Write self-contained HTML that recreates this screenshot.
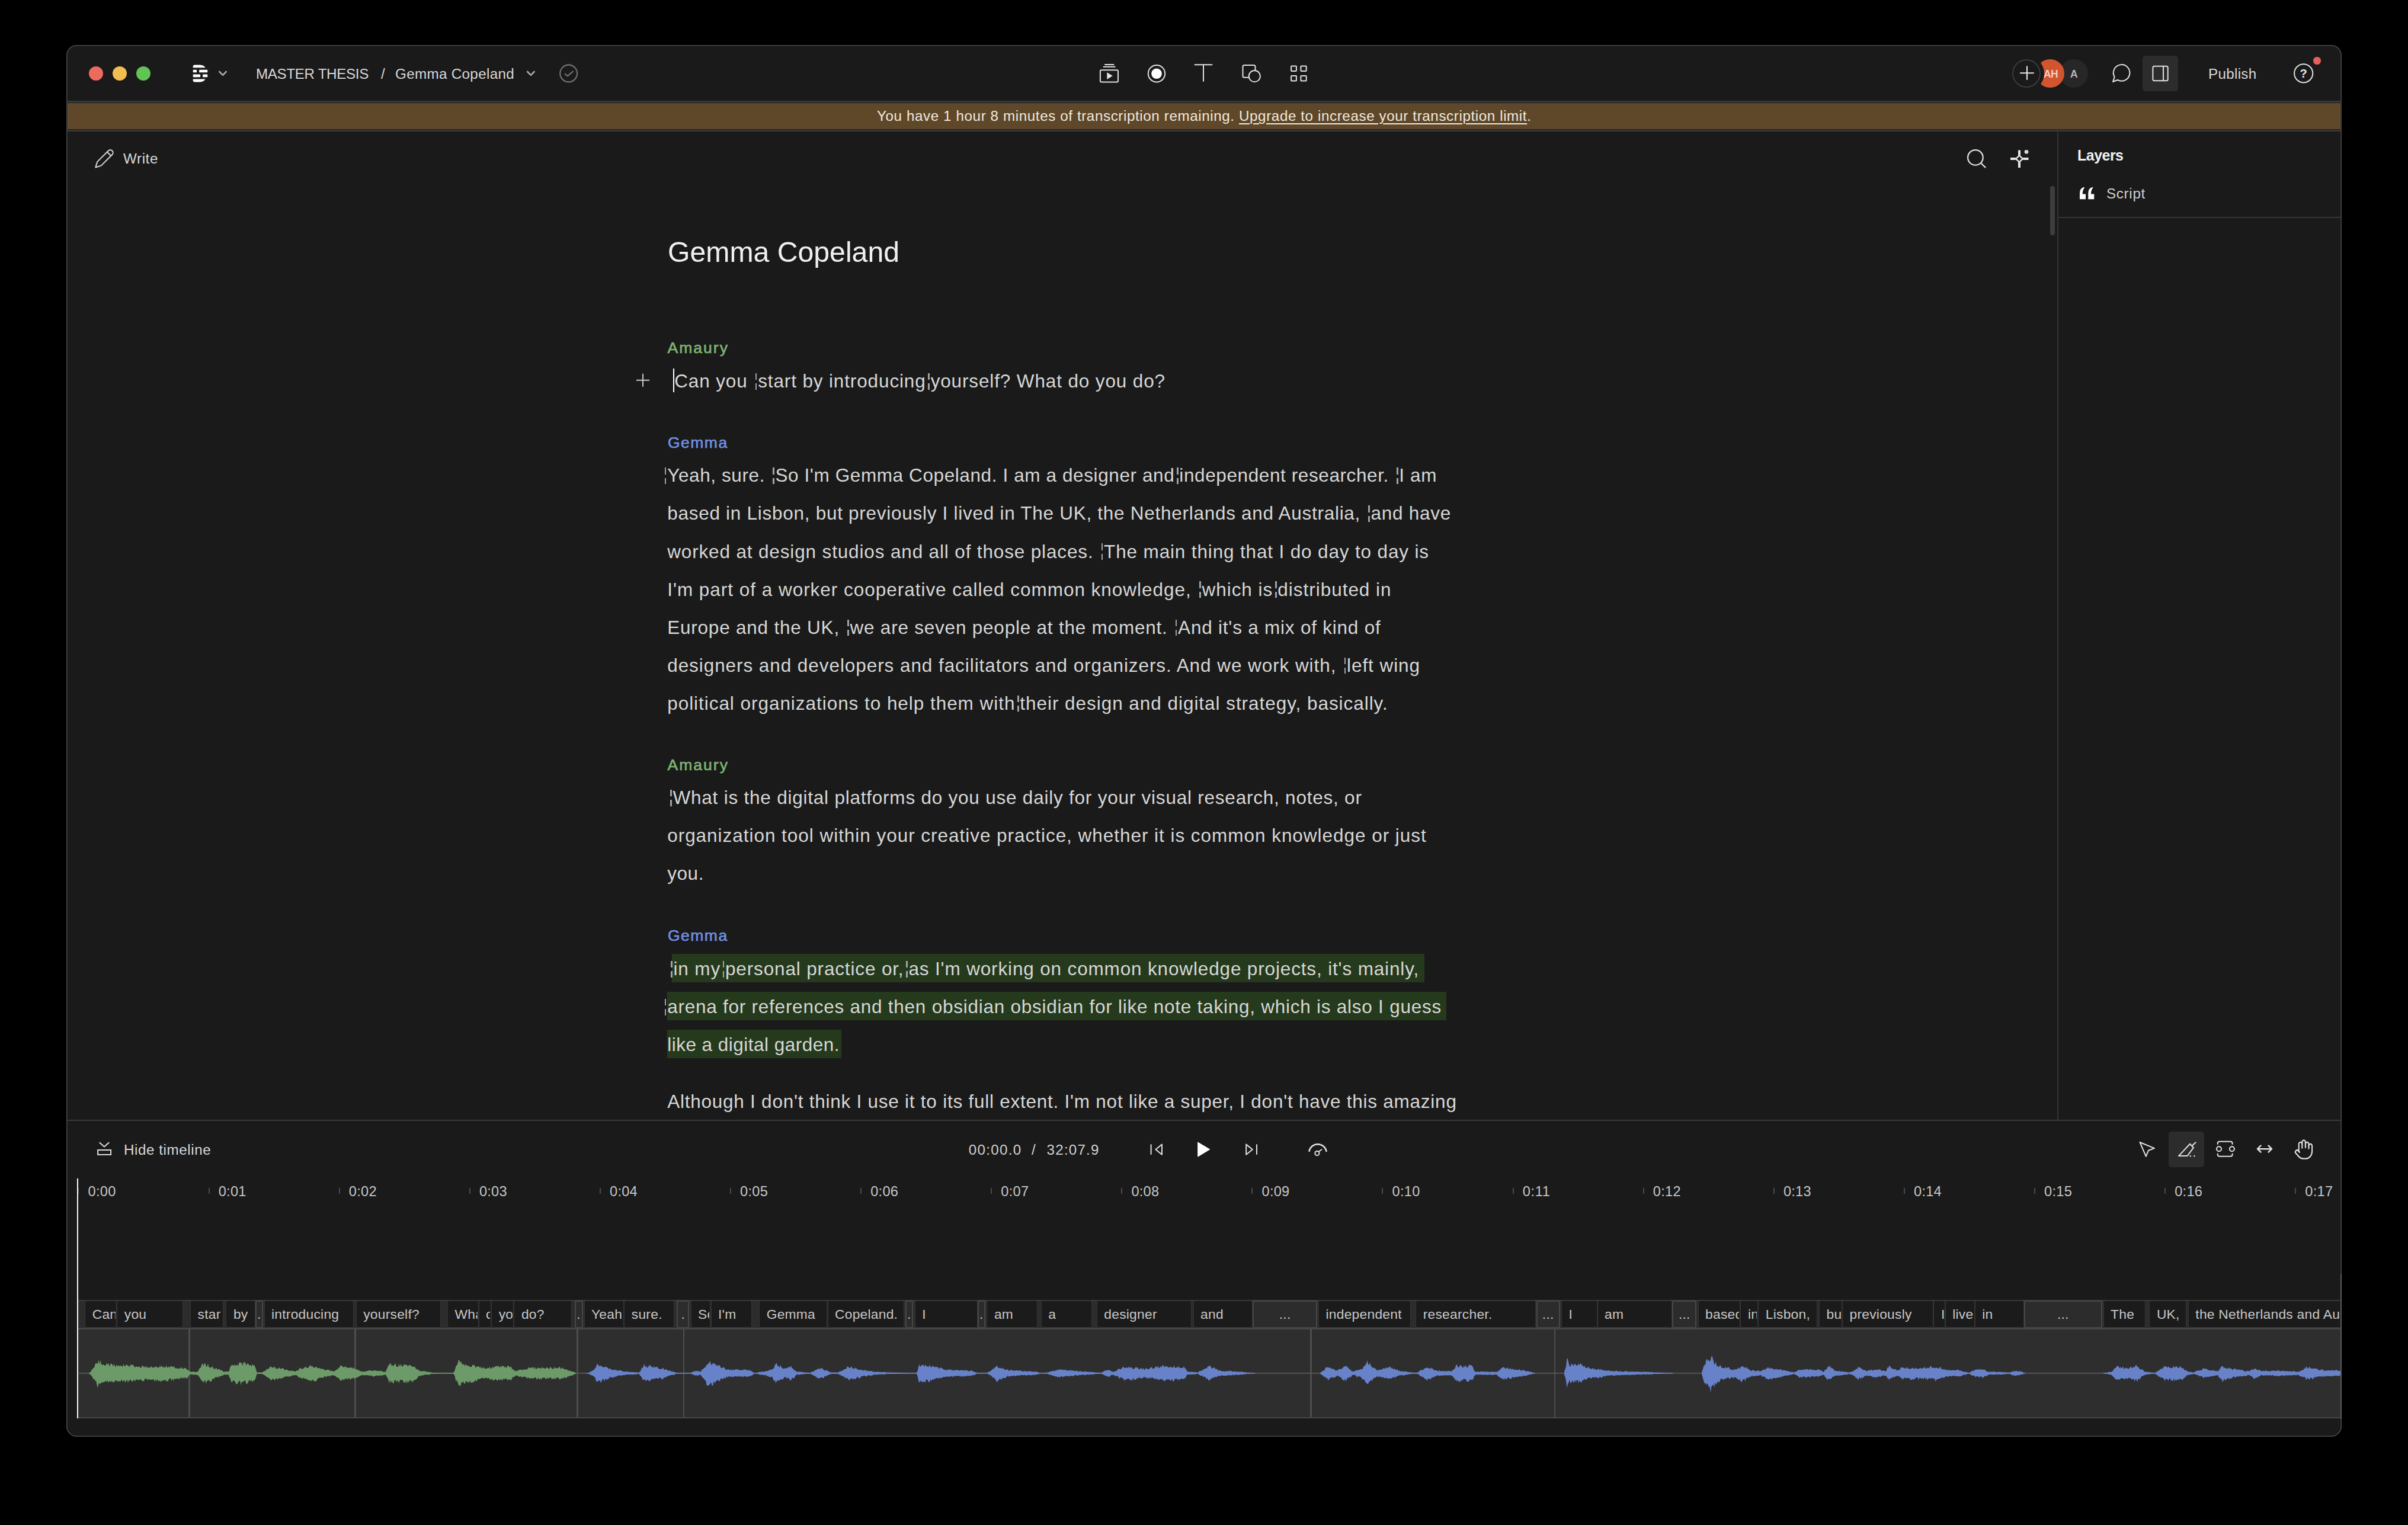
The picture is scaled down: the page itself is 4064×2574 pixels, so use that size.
<!DOCTYPE html><html><head><meta charset="utf-8"><title>Descript</title><style>
html,body{margin:0;padding:0;background:#000;}
body{width:4064px;height:2574px;position:relative;overflow:hidden;font-family:"Liberation Sans",sans-serif;}
.abs{position:absolute;}
.win{position:absolute;left:112px;top:76px;width:3840px;height:2349px;background:#1a1a1a;border-radius:17.5px;box-shadow:inset 0 0 0 1.6px #474747;overflow:hidden;}
.t{position:absolute;white-space:pre;line-height:40px;height:40px;}
.t u{text-decoration-thickness:2px;text-underline-offset:4px;}
.hl{position:absolute;background:#253a1c;}
.ln{position:absolute;background:#383838;}
.mk{display:inline-block;width:8.0px;height:1px;position:relative;vertical-align:baseline;}
.mk0{width:0;}
.mk:before,.mk:after{content:"";position:absolute;right:1.8px;width:2.4px;background:#a2a2a2;}
.mk:before{top:-23.2px;height:11.4px;}
.mk:after{top:-5.7px;height:10.4px;}
.mk0:before,.mk0:after{right:1.8px;}
.wb{position:absolute;top:2195.3px;height:46px;box-sizing:border-box;background:#1b1b1b;border:1.6px solid #343434;border-top-width:1px;border-bottom-width:1px;border-radius:3px;overflow:hidden;}
.wg{position:absolute;top:2194.5px;height:47.5px;box-sizing:border-box;background:#2c2c2c;border:2px solid #474747;border-radius:3px;}
.wt{position:absolute;white-space:pre;line-height:40px;height:40px;color:#c6c6c6;letter-spacing:0.25px;}

</style></head><body>
<div class="win"></div>
<div class="abs" style="left:113.0px;top:170.3px;width:3838.0px;height:2.3px;background:#383838;"></div>
<div class="abs" style="left:114.0px;top:173.6px;width:3836.0px;height:44.4px;background:#5f4829;"></div>
<div class="abs" style="left:113.0px;top:219.3px;width:3838.0px;height:2.3px;background:#383838;"></div>
<div class="abs" style="left:3471.5px;top:221.0px;width:2.5px;height:1669.0px;background:#333;"></div>
<div class="abs" style="left:3474.0px;top:366.3px;width:477.0px;height:2.0px;background:#353535;"></div>
<div class="abs" style="left:3460.0px;top:314.0px;width:7.5px;height:83.0px;background:#3d3d3d;border-radius:4px;"></div>
<div class="abs" style="left:113.0px;top:1889.5px;width:3838.0px;height:2.5px;background:#383838;"></div>
<div class="abs" style="left:3616.0px;top:94.3px;width:60.0px;height:60.0px;background:#2c2c2c;border-radius:5px;"></div>
<div class="abs" style="left:3660.4px;top:1910.2px;width:59.5px;height:59.5px;background:#2c2c2c;border-radius:5px;"></div>
<div class="abs" style="left:150.0px;top:112.0px;width:24.0px;height:24.0px;background:#ed6a5e;border-radius:50%;"></div>
<div class="abs" style="left:190.0px;top:112.0px;width:24.0px;height:24.0px;background:#f4bd4f;border-radius:50%;"></div>
<div class="abs" style="left:230.0px;top:112.0px;width:24.0px;height:24.0px;background:#61c454;border-radius:50%;"></div>
<div class="abs" style="left:3476.0px;top:100.0px;width:48.0px;height:48.0px;background:#272727;border-radius:50%;"></div>
<div class="abs" style="left:3436.0px;top:100.0px;width:48.0px;height:48.0px;background:#d2552f;border-radius:50%;"></div>
<div class="abs" style="left:3904.2px;top:96.1px;width:12.6px;height:12.6px;background:#e5605c;border-radius:50%;"></div>
<div class="hl" style="left:1134px;top:1610.2px;width:1269.6px;height:47.4px"></div>
<div class="hl" style="left:1126px;top:1674.2px;width:1315.0px;height:47.4px"></div>
<div class="hl" style="left:1126px;top:1738.2px;width:293.8px;height:47.4px"></div>
<div class="abs" style="left:1135.8px;top:622.0px;width:2.2px;height:40.0px;background:#ffffff;"></div>
<div class="abs" style="left:132.0px;top:2194.0px;width:3819.0px;height:48.0px;background:#2c2c2c;"></div>
<div class="abs" style="left:132.0px;top:2194.1px;width:3819.0px;height:1.8px;background:#3b3b3b;"></div>
<div class="abs" style="left:132.0px;top:2241.0px;width:3819.0px;height:2.6px;background:#454545;"></div>
<div class="abs" style="left:132.0px;top:2243.6px;width:3819.0px;height:148.4px;background:#2e2e2e;"></div>
<div class="abs" style="left:132.0px;top:2391.7px;width:3819.0px;height:2.2px;background:#474747;"></div>
<div class="abs" style="left:318.1px;top:2243.0px;width:2.6px;height:149.0px;background:#4d4d4d;"></div>
<div class="abs" style="left:598.1px;top:2243.0px;width:2.6px;height:149.0px;background:#4d4d4d;"></div>
<div class="abs" style="left:973.4px;top:2243.0px;width:2.6px;height:149.0px;background:#4d4d4d;"></div>
<div class="abs" style="left:1152.8px;top:2243.0px;width:2.6px;height:149.0px;background:#4d4d4d;"></div>
<div class="abs" style="left:2211.1px;top:2243.0px;width:2.6px;height:149.0px;background:#4d4d4d;"></div>
<div class="abs" style="left:2622.8px;top:2243.0px;width:2.6px;height:149.0px;background:#4d4d4d;"></div>
<div class="wb" style="left:143.2px;width:54.1px"></div>
<div class="wb" style="left:197.3px;width:112.0px"></div>
<div class="wb" style="left:321.0px;width:56.4px"></div>
<div class="wb" style="left:381.4px;width:49.2px"></div>
<div class="wg" style="left:430.6px;width:13.3px"></div>
<div class="wb" style="left:445.5px;width:151.8px"></div>
<div class="wb" style="left:600.7px;width:143.8px"></div>
<div class="wb" style="left:755.0px;width:52.6px"></div>
<div class="wb" style="left:807.6px;width:21.6px"></div>
<div class="wb" style="left:829.2px;width:38.2px"></div>
<div class="wb" style="left:867.4px;width:97.2px"></div>
<div class="wg" style="left:969.6px;width:14.0px"></div>
<div class="wb" style="left:985.5px;width:67.8px"></div>
<div class="wb" style="left:1053.3px;width:85.1px"></div>
<div class="wg" style="left:1142.4px;width:20.6px"></div>
<div class="wb" style="left:1165.6px;width:33.9px"></div>
<div class="wb" style="left:1199.5px;width:69.1px"></div>
<div class="wb" style="left:1281.2px;width:115.3px"></div>
<div class="wb" style="left:1396.5px;width:129.5px"></div>
<div class="wg" style="left:1527.7px;width:13.3px"></div>
<div class="wb" style="left:1543.7px;width:106.1px"></div>
<div class="wg" style="left:1649.8px;width:13.2px"></div>
<div class="wb" style="left:1665.4px;width:85.6px"></div>
<div class="wb" style="left:1756.8px;width:86.2px"></div>
<div class="wb" style="left:1850.8px;width:160.5px"></div>
<div class="wb" style="left:2013.6px;width:100.7px"></div>
<div class="wg" style="left:2114.3px;width:108.7px"></div>
<div class="wb" style="left:2225.0px;width:155.7px"></div>
<div class="wb" style="left:2389.2px;width:203.3px"></div>
<div class="wg" style="left:2592.5px;width:40.5px"></div>
<div class="wb" style="left:2635.0px;width:60.5px"></div>
<div class="wb" style="left:2695.5px;width:126.9px"></div>
<div class="wg" style="left:2822.4px;width:40.9px"></div>
<div class="wb" style="left:2865.6px;width:71.8px"></div>
<div class="wb" style="left:2937.4px;width:29.9px"></div>
<div class="wb" style="left:2967.3px;width:99.3px"></div>
<div class="wb" style="left:3070.0px;width:39.0px"></div>
<div class="wb" style="left:3109.0px;width:154.4px"></div>
<div class="wb" style="left:3263.4px;width:19.3px"></div>
<div class="wb" style="left:3282.7px;width:50.1px"></div>
<div class="wb" style="left:3332.8px;width:83.2px"></div>
<div class="wg" style="left:3416.0px;width:131.7px"></div>
<div class="wb" style="left:3549.6px;width:71.2px"></div>
<div class="wb" style="left:3627.4px;width:62.9px"></div>
<div class="wb" style="left:3692.8px;width:267.2px"></div>
<div class="abs" style="left:131.4px;top:2005.0px;width:2.0px;height:9.5px;background:#4a4a4a;"></div>
<div class="abs" style="left:351.5px;top:2005.0px;width:2.0px;height:9.5px;background:#4a4a4a;"></div>
<div class="abs" style="left:571.6px;top:2005.0px;width:2.0px;height:9.5px;background:#4a4a4a;"></div>
<div class="abs" style="left:791.7px;top:2005.0px;width:2.0px;height:9.5px;background:#4a4a4a;"></div>
<div class="abs" style="left:1011.8px;top:2005.0px;width:2.0px;height:9.5px;background:#4a4a4a;"></div>
<div class="abs" style="left:1231.9px;top:2005.0px;width:2.0px;height:9.5px;background:#4a4a4a;"></div>
<div class="abs" style="left:1452.0px;top:2005.0px;width:2.0px;height:9.5px;background:#4a4a4a;"></div>
<div class="abs" style="left:1672.1px;top:2005.0px;width:2.0px;height:9.5px;background:#4a4a4a;"></div>
<div class="abs" style="left:1892.2px;top:2005.0px;width:2.0px;height:9.5px;background:#4a4a4a;"></div>
<div class="abs" style="left:2112.3px;top:2005.0px;width:2.0px;height:9.5px;background:#4a4a4a;"></div>
<div class="abs" style="left:2332.4px;top:2005.0px;width:2.0px;height:9.5px;background:#4a4a4a;"></div>
<div class="abs" style="left:2552.5px;top:2005.0px;width:2.0px;height:9.5px;background:#4a4a4a;"></div>
<div class="abs" style="left:2772.6px;top:2005.0px;width:2.0px;height:9.5px;background:#4a4a4a;"></div>
<div class="abs" style="left:2992.7px;top:2005.0px;width:2.0px;height:9.5px;background:#4a4a4a;"></div>
<div class="abs" style="left:3212.8px;top:2005.0px;width:2.0px;height:9.5px;background:#4a4a4a;"></div>
<div class="abs" style="left:3432.9px;top:2005.0px;width:2.0px;height:9.5px;background:#4a4a4a;"></div>
<div class="abs" style="left:3653.0px;top:2005.0px;width:2.0px;height:9.5px;background:#4a4a4a;"></div>
<div class="abs" style="left:3873.1px;top:2005.0px;width:2.0px;height:9.5px;background:#4a4a4a;"></div>
<svg class="abs" style="left:0;top:0" width="4064" height="2574" viewBox="0 0 4064 2574" fill="none" stroke="#e0e0e0" stroke-width="2" stroke-linecap="round" stroke-linejoin="round">
<!-- logo -->
<g fill="#ffffff" stroke="none">
<path d="M325.7 114.3V112.2Q325.7 109.4 328.8 109.4H337.5Q344 109.6 346.6 114.3Z"/>
<rect x="325.7" y="117.7" width="6.4" height="4.6" rx="0.8"/><rect x="336.1" y="117.7" width="14.2" height="4.6" rx="0.8"/>
<rect x="325.7" y="125.6" width="12.4" height="4.7" rx="0.8"/><rect x="342.1" y="125.6" width="8.2" height="4.7" rx="0.8"/>
<path d="M325.7 133.6H346.6Q344 138.2 337.5 138.4H328.8Q325.7 138.4 325.7 135.7Z"/>
</g>
<!-- chevrons -->
<g stroke="#a9a9a9" stroke-width="2.6"><path d="M370.3 121L376 126.8L381.7 121"/><path d="M890.2 121L895.9 126.8L901.6 121"/></g>
<!-- check circle -->
<g stroke="#6e6e6e" stroke-width="2.3"><circle cx="959.7" cy="123.9" r="14.4"/><path d="M953.7 124.8L957.9 128.4L967 120.6"/></g>
<!-- scenes -->
<rect x="1856.9" y="118.2" width="30.1" height="20.4" rx="2"/><path d="M1862.5 112.7H1881.8M1865 108.9H1879.5"/>
<path d="M1868.3 122.3L1877.8 128.1L1868.3 133.9Z" fill="#e4e4e4" stroke="none"/>
<!-- record -->
<circle cx="1952" cy="124.2" r="14.2"/><circle cx="1952" cy="124.2" r="8.8" fill="#ffffff" stroke="none"/>
<!-- T -->
<path d="M2016.5 109.2H2045.5M2031 109.2V137"/>
<!-- shapes -->
<rect x="2097.5" y="110" width="21" height="20.8" rx="2.5"/><circle cx="2117.3" cy="128.6" r="9.6" fill="#1a1a1a"/>
<!-- grid -->
<rect x="2179.1" y="111.6" width="8.8" height="8.3" rx="0.8"/><rect x="2195.4" y="111.6" width="9.3" height="8.3" rx="0.8"/>
<rect x="2179.1" y="128.1" width="8.8" height="8.4" rx="0.8"/><rect x="2195.4" y="128.1" width="9.3" height="8.4" rx="0.8"/>
<!-- plus -->
<!-- chat -->
<path d="M3566 138L3568.7 129.9A13.8 13.8 0 1 1 3573.8 134.95Z"/>
<!-- sidebar -->
<rect x="3633.4" y="111.7" width="25.3" height="24.5" rx="2.5"/><path d="M3651 111.7V136.2"/>
<!-- help -->
<circle cx="3887.7" cy="123.8" r="15.6"/>
<text x="3887.7" y="131.2" font-size="20" font-weight="700" text-anchor="middle" fill="#e4e4e4" stroke="none" font-family="Liberation Sans, sans-serif">?</text>
<!-- pencil -->
<g transform="translate(175.2 268.6) rotate(45)" stroke="#d6d6d6" stroke-width="2"><path d="M-4.6 -15.4A4.6 4.6 0 0 1 4.6 -15.4L4.6 11L0 19.6L-4.6 11Z"/><path d="M-4.6 -12.6H4.6"/></g>
<!-- search -->
<g stroke="#dcdcdc" stroke-width="2.3"><circle cx="3333.9" cy="265.9" r="12.8"/><path d="M3343.2 275.2L3350.5 282.4"/></g>
<!-- sparkle -->
<g stroke="#e8e8e8"><path d="M3408 253.5V261M3408 275V283M3393 267.9H3401M3415 267.9H3423.5" stroke-width="4" stroke-linecap="butt"/>
<path d="M3408 260.2Q3409.5 266.5 3415.8 267.9Q3409.5 269.4 3408 275.8Q3406.5 269.4 3400.2 267.9Q3406.5 266.5 3408 260.2Z" stroke-width="2.4"/>
<circle cx="3420" cy="256.3" r="3.4" fill="#d6d6d6" stroke="none"/></g>
<!-- quote -->
<g fill="#ffffff" stroke="none"><path id="q" d="M3510 336.2V326Q3510 318.3 3516.3 316L3518.3 316.6Q3514.6 321 3514.6 327.6H3520V336.2Z"/><path d="M3524.3 336.2V326Q3524.3 318.3 3530.6 316L3532.6 316.6Q3528.9 321 3528.9 327.6H3534.3V336.2Z"/></g>
<!-- hide timeline -->
<g stroke="#dedede" stroke-width="2"><path d="M168.3 1928.7L176 1935.4L183.6 1928.7"/><rect x="165.1" y="1941.1" width="22" height="7.8" stroke-linejoin="miter"/></g>
<!-- transport -->
<path d="M1942.6 1932.2V1948M1950.5 1940.2L1961 1931.6V1948.8Z"/>
<path d="M2022 1928.2L2041.7 1940L2022 1952Z" fill="#ffffff" stroke="#ffffff" stroke-width="1"/>
<path d="M2103.2 1931.6L2113.8 1940.2L2103.2 1948.8ZM2121 1932.2V1948"/>
<path d="M2209.5 1943A14.8 14.8 0 0 1 2238.5 1943" stroke-width="2.5"/><circle cx="2222.9" cy="1946.6" r="3.6"/><path d="M2225.5 1944L2230.5 1940.3"/>
<!-- tools -->
<path d="M3611.5 1928L3636 1938.1L3626 1941.7L3621.8 1951.8Z" stroke-width="2"/>
<g stroke-width="2"><path d="M3677 1951.1H3691.5L3702 1937.2L3696 1930.8Z"/><path d="M3699.5 1934L3705.6 1928.3"/>
<circle cx="3696.8" cy="1951.3" r="1.2" fill="#e4e4e4" stroke="none"/><circle cx="3703.2" cy="1951.3" r="1.2" fill="#e4e4e4" stroke="none"/></g>
<path d="M3742.7 1931V1930Q3742.7 1926.8 3746 1926.8H3764.3Q3767.6 1926.8 3767.6 1930V1931M3742.7 1947.5V1948.5Q3742.7 1951.7 3746 1951.7H3764.3Q3767.6 1951.7 3767.6 1948.5V1947.5"/>
<circle cx="3745" cy="1939.2" r="4" fill="#1a1a1a"/><circle cx="3766.9" cy="1939.2" r="4" fill="#1a1a1a"/>
<path d="M3810 1939.2H3834M3815.5 1933.7L3810 1939.2L3815.5 1944.7M3828.5 1933.7L3834 1939.2L3828.5 1944.7" stroke-width="2.4"/>
<g transform="translate(3871.3 1921.6) scale(1.4 1.55)" stroke-width="1.5"><path d="M18 11V6a2 2 0 0 0-2-2a2 2 0 0 0-2 2"/><path d="M14 10V4a2 2 0 0 0-2-2a2 2 0 0 0-2 2v2"/><path d="M10 10.5V6a2 2 0 0 0-2-2a2 2 0 0 0-2 2v8"/><path d="M18 8a2 2 0 1 1 4 0v6a8 8 0 0 1-8 8h-2c-2.8 0-4.5-.86-5.99-2.34l-3.6-3.6a2 2 0 0 1 2.83-2.82L7 15"/></g>
<!-- add block plus -->
<path d="M1085 631.5V652M1074.7 641.7H1095.3" stroke="#c9c9c9" stroke-width="2"/>

<g stroke="none">
<rect x="133" y="2316.8" width="3818" height="2" fill="#555"/>
<path fill="#6c9b69" d="M150.0 2317.0L151.5 2316.6L153.0 2315.7L154.5 2312.6L156.0 2311.3L157.5 2308.5L159.0 2308.9L160.5 2302.6L162.0 2300.8L163.5 2301.6L165.0 2301.4L166.5 2294.9L168.0 2303.1L169.5 2295.6L171.0 2303.1L172.5 2304.3L174.0 2302.4L175.5 2304.3L177.0 2304.8L178.5 2304.8L180.0 2300.9L181.5 2303.2L183.0 2300.6L184.5 2306.8L186.0 2303.2L187.5 2301.3L189.0 2302.3L190.5 2306.2L192.0 2302.0L193.5 2305.0L195.0 2307.3L196.5 2302.9L198.0 2307.0L199.5 2303.8L201.0 2306.1L202.5 2305.3L204.0 2305.3L205.5 2305.5L207.0 2307.6L208.5 2301.7L210.0 2306.2L211.5 2305.6L213.0 2303.8L214.5 2303.1L216.0 2305.8L217.5 2305.5L219.0 2307.3L220.5 2302.7L222.0 2304.3L223.5 2303.5L225.0 2304.3L226.5 2306.1L228.0 2308.5L229.5 2306.2L231.0 2306.7L232.5 2307.6L234.0 2306.7L235.5 2306.3L237.0 2309.0L238.5 2308.6L240.0 2304.8L241.5 2305.2L243.0 2308.3L244.5 2306.0L246.0 2309.0L247.5 2305.4L249.0 2308.7L250.5 2307.8L252.0 2308.5L253.5 2308.4L255.0 2305.5L256.5 2307.7L258.0 2308.7L259.5 2307.2L261.0 2308.5L262.5 2306.6L264.0 2305.9L265.5 2308.6L267.0 2308.2L268.5 2308.1L270.0 2305.3L271.5 2307.9L273.0 2304.4L274.5 2308.0L276.0 2307.3L277.5 2307.8L279.0 2308.8L280.5 2303.9L282.0 2308.2L283.5 2308.3L285.0 2306.0L286.5 2308.8L288.0 2305.4L289.5 2306.0L291.0 2307.7L292.5 2306.0L294.0 2307.2L295.5 2309.1L297.0 2309.9L298.5 2309.1L300.0 2310.4L301.5 2310.0L303.0 2310.1L304.5 2307.6L306.0 2310.9L307.5 2307.6L309.0 2310.9L310.5 2309.8L312.0 2308.8L313.5 2309.3L315.0 2311.2L316.5 2312.2L318.0 2312.9L319.5 2313.7L321.0 2315.4L322.5 2315.2L324.0 2315.8L325.5 2315.1L327.0 2314.9L328.5 2315.9L330.0 2315.8L331.5 2315.8L333.0 2315.0L334.5 2314.7L336.0 2310.7L337.5 2308.7L339.0 2308.3L340.5 2302.7L342.0 2301.5L343.5 2305.7L345.0 2300.6L346.5 2302.0L348.0 2306.2L349.5 2306.9L351.0 2301.2L352.5 2307.7L354.0 2307.7L355.5 2308.7L357.0 2308.1L358.5 2305.6L360.0 2309.7L361.5 2310.6L363.0 2311.2L364.5 2308.0L366.0 2310.5L367.5 2312.0L369.0 2310.4L370.5 2310.8L372.0 2313.6L373.5 2312.1L375.0 2313.6L376.5 2314.9L378.0 2315.3L379.5 2315.8L381.0 2314.6L382.5 2315.1L384.0 2314.7L385.5 2315.6L387.0 2313.2L388.5 2306.6L390.0 2306.0L391.5 2302.5L393.0 2304.9L394.5 2304.9L396.0 2302.7L397.5 2305.6L399.0 2304.6L400.5 2303.2L402.0 2305.3L403.5 2300.5L405.0 2298.9L406.5 2300.7L408.0 2300.2L409.5 2305.5L411.0 2299.2L412.5 2299.6L414.0 2299.8L415.5 2305.0L417.0 2301.4L418.5 2301.4L420.0 2303.0L421.5 2305.2L423.0 2303.4L424.5 2306.7L426.0 2301.9L427.5 2305.5L429.0 2303.5L430.5 2306.9L432.0 2311.1L433.5 2316.6L435.0 2316.6L436.5 2316.6L438.0 2316.6L439.5 2316.6L441.0 2316.6L442.5 2316.6L444.0 2315.3L445.5 2314.4L447.0 2313.9L448.5 2313.4L450.0 2310.4L451.5 2311.1L453.0 2310.7L454.5 2308.7L456.0 2307.0L457.5 2306.2L459.0 2308.8L460.5 2308.0L462.0 2308.6L463.5 2306.0L465.0 2309.7L466.5 2310.5L468.0 2309.2L469.5 2310.8L471.0 2307.9L472.5 2309.3L474.0 2310.9L475.5 2309.7L477.0 2309.5L478.5 2309.3L480.0 2312.4L481.5 2312.6L483.0 2311.3L484.5 2311.9L486.0 2313.1L487.5 2313.8L489.0 2314.1L490.5 2312.9L492.0 2314.4L493.5 2313.3L495.0 2314.1L496.5 2314.6L498.0 2315.3L499.5 2313.9L501.0 2313.0L502.5 2313.5L504.0 2312.7L505.5 2308.6L507.0 2309.2L508.5 2310.7L510.0 2310.2L511.5 2310.5L513.0 2309.0L514.5 2307.9L516.0 2306.3L517.5 2309.1L519.0 2308.9L520.5 2308.8L522.0 2305.6L523.5 2303.9L525.0 2307.0L526.5 2304.9L528.0 2307.1L529.5 2308.4L531.0 2308.8L532.5 2307.2L534.0 2306.4L535.5 2309.8L537.0 2308.4L538.5 2309.2L540.0 2309.5L541.5 2310.3L543.0 2311.1L544.5 2309.7L546.0 2311.3L547.5 2312.1L549.0 2313.1L550.5 2312.3L552.0 2312.0L553.5 2311.6L555.0 2312.4L556.5 2312.9L558.0 2314.1L559.5 2313.6L561.0 2314.3L562.5 2314.4L564.0 2314.6L565.5 2314.0L567.0 2311.9L568.5 2312.0L570.0 2310.3L571.5 2309.2L573.0 2308.0L574.5 2304.7L576.0 2305.1L577.5 2305.5L579.0 2308.4L580.5 2306.6L582.0 2307.7L583.5 2306.1L585.0 2308.4L586.5 2308.4L588.0 2309.0L589.5 2307.9L591.0 2308.9L592.5 2308.1L594.0 2308.3L595.5 2310.5L597.0 2307.5L598.5 2311.2L600.0 2310.4L601.5 2311.1L603.0 2312.6L604.5 2311.7L606.0 2313.5L607.5 2314.1L609.0 2314.8L610.5 2314.2L612.0 2315.6L613.5 2314.8L615.0 2315.4L616.5 2314.5L618.0 2314.7L619.5 2313.8L621.0 2314.0L622.5 2312.9L624.0 2312.8L625.5 2313.4L627.0 2313.4L628.5 2314.0L630.0 2313.4L631.5 2313.5L633.0 2312.5L634.5 2314.0L636.0 2313.5L637.5 2314.2L639.0 2313.6L640.5 2314.5L642.0 2313.8L643.5 2313.4L645.0 2314.8L646.5 2315.3L648.0 2315.4L649.5 2315.2L651.0 2315.7L652.5 2311.1L654.0 2308.6L655.5 2304.3L657.0 2304.1L658.5 2300.6L660.0 2302.4L661.5 2305.9L663.0 2304.2L664.5 2305.4L666.0 2302.7L667.5 2301.4L669.0 2306.7L670.5 2307.0L672.0 2306.8L673.5 2302.0L675.0 2307.0L676.5 2302.0L678.0 2306.1L679.5 2306.9L681.0 2303.7L682.5 2303.3L684.0 2303.5L685.5 2303.8L687.0 2303.7L688.5 2307.0L690.0 2304.1L691.5 2304.0L693.0 2304.6L694.5 2305.7L696.0 2307.3L697.5 2307.1L699.0 2306.4L700.5 2307.5L702.0 2310.6L703.5 2311.7L705.0 2310.4L706.5 2313.6L708.0 2312.9L709.5 2314.2L711.0 2314.7L712.5 2314.4L714.0 2314.6L715.5 2313.9L717.0 2314.8L718.5 2314.5L720.0 2315.7L721.5 2315.1L723.0 2315.9L724.5 2315.4L726.0 2316.1L727.5 2316.6L729.0 2316.7L730.5 2316.9L732.0 2316.9L733.5 2316.9L735.0 2316.9L736.5 2316.9L738.0 2317.0L739.5 2317.0L741.0 2317.0L742.5 2317.0L744.0 2317.0L745.5 2317.0L747.0 2317.0L748.5 2317.0L750.0 2317.0L751.5 2317.0L753.0 2317.0L754.5 2317.0L756.0 2317.0L757.5 2317.0L759.0 2317.0L760.5 2317.0L762.0 2317.0L763.5 2317.0L765.0 2317.0L766.5 2315.8L768.0 2311.6L769.5 2305.5L771.0 2304.4L772.5 2301.4L774.0 2295.0L775.5 2296.6L777.0 2300.3L778.5 2297.7L780.0 2303.9L781.5 2301.8L783.0 2303.6L784.5 2305.4L786.0 2302.0L787.5 2305.1L789.0 2305.3L790.5 2304.6L792.0 2306.9L793.5 2306.4L795.0 2307.7L796.5 2306.1L798.0 2303.1L799.5 2304.4L801.0 2304.0L802.5 2308.8L804.0 2307.1L805.5 2306.1L807.0 2306.7L808.5 2305.9L810.0 2309.2L811.5 2306.4L813.0 2310.6L814.5 2308.7L816.0 2307.4L817.5 2309.8L819.0 2310.8L820.5 2309.0L822.0 2310.5L823.5 2308.3L825.0 2310.3L826.5 2306.8L828.0 2309.9L829.5 2310.2L831.0 2306.4L832.5 2309.3L834.0 2307.7L835.5 2305.7L837.0 2307.0L838.5 2305.0L840.0 2306.4L841.5 2304.4L843.0 2308.9L844.5 2305.7L846.0 2307.4L847.5 2304.7L849.0 2306.8L850.5 2305.1L852.0 2308.9L853.5 2306.4L855.0 2309.2L856.5 2305.3L858.0 2304.8L859.5 2307.5L861.0 2307.8L862.5 2306.6L864.0 2310.0L865.5 2311.5L867.0 2312.1L868.5 2313.2L870.0 2315.0L871.5 2313.1L873.0 2313.8L874.5 2313.8L876.0 2312.1L877.5 2311.7L879.0 2311.5L880.5 2312.4L882.0 2312.4L883.5 2311.7L885.0 2311.5L886.5 2311.5L888.0 2312.0L889.5 2311.2L891.0 2309.7L892.5 2307.2L894.0 2309.6L895.5 2308.7L897.0 2308.3L898.5 2308.6L900.0 2307.2L901.5 2311.0L903.0 2307.2L904.5 2311.1L906.0 2309.7L907.5 2310.1L909.0 2308.0L910.5 2309.1L912.0 2309.4L913.5 2310.3L915.0 2307.2L916.5 2309.4L918.0 2308.8L919.5 2310.5L921.0 2309.7L922.5 2307.8L924.0 2308.8L925.5 2310.1L927.0 2310.4L928.5 2307.6L930.0 2307.9L931.5 2310.1L933.0 2310.7L934.5 2310.0L936.0 2307.0L937.5 2309.7L939.0 2309.5L940.5 2308.4L942.0 2309.7L943.5 2307.1L945.0 2307.4L946.5 2310.5L948.0 2309.9L949.5 2307.9L951.0 2310.8L952.5 2310.8L954.0 2311.8L955.5 2311.0L957.0 2311.8L958.5 2313.2L960.0 2313.3L961.5 2313.8L963.0 2314.0L964.5 2314.5L966.0 2315.2L967.5 2314.9L969.0 2316.0L970.5 2316.5L972.0 2316.8L972.0 2318.8L970.5 2319.1L969.0 2319.9L967.5 2320.5L966.0 2321.8L964.5 2321.7L963.0 2321.9L961.5 2321.9L960.0 2323.6L958.5 2323.2L957.0 2324.3L955.5 2326.4L954.0 2325.2L952.5 2324.2L951.0 2326.9L949.5 2325.2L948.0 2327.6L946.5 2326.4L945.0 2328.8L943.5 2327.0L942.0 2324.7L940.5 2325.6L939.0 2325.2L937.5 2328.3L936.0 2325.4L934.5 2328.3L933.0 2326.3L931.5 2328.4L930.0 2324.9L928.5 2324.9L927.0 2326.3L925.5 2327.1L924.0 2324.9L922.5 2327.7L921.0 2327.8L919.5 2325.4L918.0 2324.9L916.5 2325.9L915.0 2324.9L913.5 2328.7L912.0 2326.4L910.5 2329.0L909.0 2324.9L907.5 2327.4L906.0 2328.7L904.5 2325.3L903.0 2325.2L901.5 2324.9L900.0 2327.3L898.5 2326.2L897.0 2326.2L895.5 2326.0L894.0 2327.5L892.5 2325.2L891.0 2325.0L889.5 2327.2L888.0 2324.1L886.5 2324.5L885.0 2323.4L883.5 2323.6L882.0 2324.7L880.5 2324.5L879.0 2322.8L877.5 2324.2L876.0 2323.0L874.5 2323.4L873.0 2321.6L871.5 2322.0L870.0 2321.4L868.5 2323.9L867.0 2324.0L865.5 2324.3L864.0 2326.9L862.5 2330.3L861.0 2328.2L859.5 2328.4L858.0 2328.4L856.5 2329.8L855.0 2327.4L853.5 2326.5L852.0 2327.5L850.5 2328.4L849.0 2326.8L847.5 2330.8L846.0 2328.1L844.5 2328.6L843.0 2330.0L841.5 2327.1L840.0 2330.2L838.5 2330.0L837.0 2328.2L835.5 2327.5L834.0 2330.0L832.5 2330.1L831.0 2328.7L829.5 2326.8L828.0 2329.4L826.5 2328.0L825.0 2325.5L823.5 2327.1L822.0 2325.9L820.5 2325.8L819.0 2325.2L817.5 2327.7L816.0 2325.2L814.5 2326.6L813.0 2325.2L811.5 2327.0L810.0 2327.0L808.5 2328.3L807.0 2327.1L805.5 2329.3L804.0 2331.9L802.5 2328.9L801.0 2331.2L799.5 2332.6L798.0 2333.4L796.5 2333.3L795.0 2334.4L793.5 2329.7L792.0 2334.6L790.5 2331.7L789.0 2334.0L787.5 2331.3L786.0 2331.5L784.5 2336.3L783.0 2334.4L781.5 2331.5L780.0 2333.6L778.5 2333.4L777.0 2340.0L775.5 2338.2L774.0 2338.1L772.5 2333.0L771.0 2328.9L769.5 2331.9L768.0 2324.3L766.5 2320.3L765.0 2318.6L763.5 2318.6L762.0 2318.6L760.5 2318.6L759.0 2318.6L757.5 2318.6L756.0 2318.6L754.5 2318.6L753.0 2318.6L751.5 2318.6L750.0 2318.6L748.5 2318.6L747.0 2318.6L745.5 2318.6L744.0 2318.6L742.5 2318.6L741.0 2318.6L739.5 2318.6L738.0 2318.6L736.5 2318.7L735.0 2318.7L733.5 2318.7L732.0 2318.7L730.5 2318.7L729.0 2318.9L727.5 2319.0L726.0 2319.6L724.5 2320.4L723.0 2320.5L721.5 2320.1L720.0 2320.3L718.5 2320.2L717.0 2320.4L715.5 2320.5L714.0 2321.7L712.5 2320.9L711.0 2321.7L709.5 2323.1L708.0 2322.0L706.5 2322.2L705.0 2325.5L703.5 2327.1L702.0 2328.8L700.5 2328.7L699.0 2329.8L697.5 2330.4L696.0 2333.4L694.5 2330.7L693.0 2329.0L691.5 2331.8L690.0 2330.3L688.5 2335.1L687.0 2329.7L685.5 2335.4L684.0 2330.6L682.5 2334.2L681.0 2333.3L679.5 2328.9L678.0 2329.2L676.5 2329.0L675.0 2329.0L673.5 2334.8L672.0 2331.1L670.5 2330.5L669.0 2332.6L667.5 2328.9L666.0 2329.3L664.5 2334.5L663.0 2334.9L661.5 2330.5L660.0 2334.3L658.5 2329.0L657.0 2334.8L655.5 2329.2L654.0 2325.7L652.5 2323.5L651.0 2320.0L649.5 2320.4L648.0 2320.6L646.5 2321.3L645.0 2321.8L643.5 2321.5L642.0 2322.2L640.5 2321.0L639.0 2322.9L637.5 2321.4L636.0 2321.6L634.5 2322.2L633.0 2322.2L631.5 2323.5L630.0 2323.4L628.5 2323.1L627.0 2321.6L625.5 2321.6L624.0 2322.5L622.5 2321.6L621.0 2321.0L619.5 2320.9L618.0 2321.7L616.5 2320.7L615.0 2321.5L613.5 2321.2L612.0 2321.2L610.5 2320.6L609.0 2322.1L607.5 2322.3L606.0 2323.1L604.5 2324.5L603.0 2324.6L601.5 2325.7L600.0 2324.9L598.5 2327.7L597.0 2325.4L595.5 2325.4L594.0 2327.2L592.5 2326.4L591.0 2329.7L589.5 2325.5L588.0 2326.7L586.5 2328.9L585.0 2326.0L583.5 2327.8L582.0 2326.5L580.5 2330.6L579.0 2327.2L577.5 2329.1L576.0 2330.4L574.5 2330.2L573.0 2328.0L571.5 2325.7L570.0 2325.6L568.5 2324.7L567.0 2323.4L565.5 2322.1L564.0 2322.1L562.5 2321.4L561.0 2321.0L559.5 2322.0L558.0 2321.5L556.5 2323.7L555.0 2322.2L553.5 2322.6L552.0 2322.9L550.5 2324.5L549.0 2323.1L547.5 2323.3L546.0 2325.1L544.5 2325.8L543.0 2325.0L541.5 2325.7L540.0 2324.8L538.5 2326.1L537.0 2326.3L535.5 2327.6L534.0 2331.2L532.5 2331.7L531.0 2330.6L529.5 2331.5L528.0 2328.3L526.5 2329.7L525.0 2331.6L523.5 2329.1L522.0 2330.6L520.5 2329.5L519.0 2328.6L517.5 2328.1L516.0 2326.4L514.5 2328.0L513.0 2325.5L511.5 2325.7L510.0 2328.0L508.5 2325.6L507.0 2325.9L505.5 2324.0L504.0 2325.7L502.5 2322.6L501.0 2321.8L499.5 2320.7L498.0 2321.2L496.5 2321.2L495.0 2321.8L493.5 2320.9L492.0 2322.8L490.5 2322.4L489.0 2323.8L487.5 2323.4L486.0 2323.1L484.5 2324.0L483.0 2322.6L481.5 2324.2L480.0 2323.5L478.5 2324.9L477.0 2326.7L475.5 2325.6L474.0 2326.4L472.5 2327.5L471.0 2325.3L469.5 2327.7L468.0 2328.7L466.5 2325.4L465.0 2328.0L463.5 2330.1L462.0 2328.1L460.5 2326.8L459.0 2328.4L457.5 2330.2L456.0 2327.8L454.5 2327.1L453.0 2324.7L451.5 2325.6L450.0 2323.8L448.5 2322.6L447.0 2321.5L445.5 2320.6L444.0 2320.1L442.5 2319.0L441.0 2319.0L439.5 2319.0L438.0 2319.0L436.5 2319.0L435.0 2319.0L433.5 2319.0L432.0 2324.2L430.5 2328.8L429.0 2329.7L427.5 2330.5L426.0 2332.9L424.5 2328.6L423.0 2332.3L421.5 2329.3L420.0 2329.7L418.5 2333.9L417.0 2335.8L415.5 2336.1L414.0 2330.0L412.5 2330.6L411.0 2331.5L409.5 2333.1L408.0 2331.7L406.5 2337.8L405.0 2330.9L403.5 2330.5L402.0 2333.0L400.5 2336.4L399.0 2335.7L397.5 2334.2L396.0 2330.4L394.5 2330.4L393.0 2330.3L391.5 2333.8L390.0 2331.4L388.5 2326.2L387.0 2324.2L385.5 2320.1L384.0 2320.2L382.5 2320.5L381.0 2320.3L379.5 2320.1L378.0 2320.4L376.5 2321.3L375.0 2322.1L373.5 2322.4L372.0 2323.2L370.5 2322.5L369.0 2325.8L367.5 2323.3L366.0 2324.8L364.5 2324.8L363.0 2324.6L361.5 2327.4L360.0 2327.1L358.5 2326.9L357.0 2331.7L355.5 2332.0L354.0 2331.4L352.5 2328.5L351.0 2330.4L349.5 2329.9L348.0 2335.6L346.5 2330.3L345.0 2330.0L343.5 2334.3L342.0 2330.8L340.5 2330.8L339.0 2328.3L337.5 2325.7L336.0 2323.7L334.5 2321.5L333.0 2320.8L331.5 2320.8L330.0 2319.8L328.5 2320.2L327.0 2320.7L325.5 2320.2L324.0 2319.8L322.5 2319.8L321.0 2320.1L319.5 2320.7L318.0 2323.0L316.5 2325.3L315.0 2326.9L313.5 2325.7L312.0 2324.6L310.5 2327.0L309.0 2324.6L307.5 2327.2L306.0 2325.4L304.5 2324.8L303.0 2328.5L301.5 2326.7L300.0 2327.8L298.5 2325.9L297.0 2328.2L295.5 2326.7L294.0 2327.6L292.5 2330.8L291.0 2326.4L289.5 2331.0L288.0 2326.4L286.5 2326.4L285.0 2328.0L283.5 2331.6L282.0 2331.2L280.5 2331.5L279.0 2328.0L277.5 2330.0L276.0 2329.8L274.5 2330.5L273.0 2329.7L271.5 2333.2L270.0 2329.8L268.5 2330.9L267.0 2331.0L265.5 2327.4L264.0 2331.7L262.5 2327.9L261.0 2332.2L259.5 2327.7L258.0 2328.6L256.5 2329.1L255.0 2328.9L253.5 2327.9L252.0 2329.3L250.5 2327.2L249.0 2329.8L247.5 2327.7L246.0 2327.0L244.5 2327.1L243.0 2331.2L241.5 2331.0L240.0 2330.8L238.5 2329.4L237.0 2327.6L235.5 2328.8L234.0 2329.9L232.5 2328.3L231.0 2329.2L229.5 2327.8L228.0 2332.1L226.5 2329.1L225.0 2329.7L223.5 2331.4L222.0 2332.1L220.5 2327.7L219.0 2330.3L217.5 2329.8L216.0 2333.7L214.5 2328.7L213.0 2330.6L211.5 2334.3L210.0 2328.7L208.5 2331.2L207.0 2332.1L205.5 2328.4L204.0 2330.0L202.5 2332.9L201.0 2330.3L199.5 2332.1L198.0 2331.2L196.5 2330.3L195.0 2329.4L193.5 2331.6L192.0 2333.9L190.5 2331.7L189.0 2332.4L187.5 2330.6L186.0 2332.9L184.5 2330.2L183.0 2334.3L181.5 2329.9L180.0 2332.8L178.5 2330.1L177.0 2333.0L175.5 2331.8L174.0 2334.2L172.5 2332.6L171.0 2334.6L169.5 2334.7L168.0 2336.7L166.5 2333.4L165.0 2342.8L163.5 2337.4L162.0 2330.3L160.5 2330.4L159.0 2326.9L157.5 2328.2L156.0 2324.4L154.5 2321.9L153.0 2320.9L151.5 2319.0L150.0 2318.6Z"/>
<path fill="#6882c9" d="M990.0 2317.0L991.5 2317.0L993.0 2317.0L994.5 2316.7L996.0 2315.0L997.5 2315.4L999.0 2313.5L1000.5 2313.2L1002.0 2312.6L1003.5 2310.6L1005.0 2309.3L1006.5 2305.6L1008.0 2301.4L1009.5 2303.6L1011.0 2306.2L1012.5 2304.6L1014.0 2305.8L1015.5 2305.5L1017.0 2307.7L1018.5 2307.8L1020.0 2307.5L1021.5 2307.2L1023.0 2306.5L1024.5 2308.2L1026.0 2308.8L1027.5 2311.2L1029.0 2309.3L1030.5 2310.6L1032.0 2311.9L1033.5 2312.0L1035.0 2312.2L1036.5 2312.8L1038.0 2311.3L1039.5 2312.7L1041.0 2312.5L1042.5 2313.9L1044.0 2313.0L1045.5 2312.7L1047.0 2313.0L1048.5 2313.2L1050.0 2314.4L1051.5 2314.4L1053.0 2315.2L1054.5 2315.1L1056.0 2315.2L1057.5 2314.9L1059.0 2314.9L1060.5 2315.2L1062.0 2315.4L1063.5 2315.9L1065.0 2316.0L1066.5 2315.3L1068.0 2316.0L1069.5 2315.9L1071.0 2316.2L1072.5 2316.2L1074.0 2316.3L1075.5 2316.5L1077.0 2316.5L1078.5 2316.6L1080.0 2315.2L1081.5 2313.3L1083.0 2308.6L1084.5 2309.2L1086.0 2306.3L1087.5 2302.0L1089.0 2308.1L1090.5 2305.4L1092.0 2308.2L1093.5 2308.6L1095.0 2305.1L1096.5 2304.3L1098.0 2304.8L1099.5 2307.6L1101.0 2306.7L1102.5 2309.4L1104.0 2305.8L1105.5 2307.8L1107.0 2308.4L1108.5 2306.0L1110.0 2308.3L1111.5 2310.6L1113.0 2310.6L1114.5 2310.9L1116.0 2311.0L1117.5 2310.1L1119.0 2308.5L1120.5 2311.7L1122.0 2312.0L1123.5 2311.3L1125.0 2311.4L1126.5 2312.7L1128.0 2313.8L1129.5 2313.5L1131.0 2313.1L1132.5 2314.7L1134.0 2314.9L1135.5 2314.8L1137.0 2315.5L1138.5 2315.9L1140.0 2316.5L1141.5 2316.8L1143.0 2316.9L1144.5 2316.9L1146.0 2317.0L1147.5 2317.0L1149.0 2317.0L1150.5 2317.0L1152.0 2317.0L1153.5 2317.0L1155.0 2317.0L1156.5 2317.0L1158.0 2317.0L1159.5 2317.0L1161.0 2317.0L1162.5 2317.0L1164.0 2317.0L1165.5 2317.0L1167.0 2316.8L1168.5 2315.3L1170.0 2315.4L1171.5 2314.6L1173.0 2314.3L1174.5 2314.4L1176.0 2313.5L1177.5 2314.4L1179.0 2314.6L1180.5 2314.2L1182.0 2315.8L1183.5 2314.3L1185.0 2310.8L1186.5 2311.6L1188.0 2309.1L1189.5 2308.4L1191.0 2307.1L1192.5 2303.6L1194.0 2303.4L1195.5 2300.9L1197.0 2300.0L1198.5 2297.0L1200.0 2303.2L1201.5 2304.0L1203.0 2300.7L1204.5 2301.0L1206.0 2302.1L1207.5 2302.4L1209.0 2305.8L1210.5 2303.4L1212.0 2306.2L1213.5 2303.7L1215.0 2304.6L1216.5 2308.9L1218.0 2308.5L1219.5 2309.3L1221.0 2307.3L1222.5 2308.5L1224.0 2311.0L1225.5 2312.0L1227.0 2312.6L1228.5 2310.6L1230.0 2311.6L1231.5 2312.7L1233.0 2311.6L1234.5 2312.4L1236.0 2313.1L1237.5 2310.7L1239.0 2313.2L1240.5 2311.7L1242.0 2311.1L1243.5 2311.8L1245.0 2310.7L1246.5 2312.3L1248.0 2312.7L1249.5 2312.3L1251.0 2313.3L1252.5 2312.7L1254.0 2312.0L1255.5 2312.1L1257.0 2311.2L1258.5 2312.0L1260.0 2312.0L1261.5 2313.5L1263.0 2313.1L1264.5 2311.4L1266.0 2314.2L1267.5 2313.6L1269.0 2314.5L1270.5 2315.9L1272.0 2316.6L1273.5 2317.0L1275.0 2317.0L1276.5 2316.9L1278.0 2316.8L1279.5 2316.6L1281.0 2315.8L1282.5 2315.3L1284.0 2316.0L1285.5 2315.0L1287.0 2314.8L1288.5 2315.4L1290.0 2315.3L1291.5 2314.7L1293.0 2314.1L1294.5 2314.3L1296.0 2314.1L1297.5 2312.9L1299.0 2312.0L1300.5 2312.1L1302.0 2312.1L1303.5 2310.7L1305.0 2310.4L1306.5 2308.7L1308.0 2303.3L1309.5 2302.3L1311.0 2300.5L1312.5 2306.4L1314.0 2305.5L1315.5 2308.2L1317.0 2303.7L1318.5 2307.5L1320.0 2308.8L1321.5 2310.2L1323.0 2310.3L1324.5 2309.2L1326.0 2309.5L1327.5 2309.6L1329.0 2308.9L1330.5 2307.2L1332.0 2307.7L1333.5 2307.7L1335.0 2305.3L1336.5 2309.3L1338.0 2309.8L1339.5 2311.6L1341.0 2313.0L1342.5 2313.6L1344.0 2314.8L1345.5 2315.4L1347.0 2315.5L1348.5 2315.0L1350.0 2315.7L1351.5 2315.1L1353.0 2316.1L1354.5 2316.1L1356.0 2316.1L1357.5 2316.5L1359.0 2316.5L1360.5 2316.6L1362.0 2316.7L1363.5 2316.7L1365.0 2316.8L1366.5 2316.8L1368.0 2316.9L1369.5 2315.6L1371.0 2314.9L1372.5 2314.9L1374.0 2314.4L1375.5 2312.4L1377.0 2312.4L1378.5 2311.5L1380.0 2310.3L1381.5 2310.1L1383.0 2311.2L1384.5 2309.1L1386.0 2310.5L1387.5 2308.5L1389.0 2311.3L1390.5 2312.6L1392.0 2313.3L1393.5 2313.4L1395.0 2312.5L1396.5 2313.6L1398.0 2314.7L1399.5 2314.9L1401.0 2316.2L1402.5 2316.6L1404.0 2316.6L1405.5 2316.6L1407.0 2316.6L1408.5 2316.6L1410.0 2316.6L1411.5 2316.6L1413.0 2316.6L1414.5 2316.6L1416.0 2315.9L1417.5 2314.0L1419.0 2314.7L1420.5 2313.9L1422.0 2313.2L1423.5 2312.6L1425.0 2310.8L1426.5 2310.9L1428.0 2311.1L1429.5 2307.0L1431.0 2306.6L1432.5 2308.1L1434.0 2309.2L1435.5 2308.2L1437.0 2306.2L1438.5 2309.4L1440.0 2310.3L1441.5 2309.4L1443.0 2310.0L1444.5 2308.1L1446.0 2310.9L1447.5 2310.9L1449.0 2312.3L1450.5 2312.5L1452.0 2311.2L1453.5 2313.0L1455.0 2311.4L1456.5 2313.5L1458.0 2313.6L1459.5 2312.6L1461.0 2311.9L1462.5 2314.2L1464.0 2314.1L1465.5 2313.7L1467.0 2314.0L1468.5 2314.7L1470.0 2313.7L1471.5 2314.2L1473.0 2315.2L1474.5 2315.4L1476.0 2315.6L1477.5 2315.8L1479.0 2315.7L1480.5 2315.2L1482.0 2315.5L1483.5 2315.3L1485.0 2316.1L1486.5 2315.7L1488.0 2316.0L1489.5 2316.0L1491.0 2316.0L1492.5 2315.6L1494.0 2316.0L1495.5 2316.5L1497.0 2316.5L1498.5 2316.5L1500.0 2316.5L1501.5 2316.6L1503.0 2316.6L1504.5 2316.6L1506.0 2316.6L1507.5 2316.6L1509.0 2316.7L1510.5 2316.7L1512.0 2316.7L1513.5 2316.7L1515.0 2316.7L1516.5 2316.8L1518.0 2316.8L1519.5 2316.8L1521.0 2316.8L1522.5 2316.8L1524.0 2316.9L1525.5 2316.9L1527.0 2316.9L1528.5 2316.9L1530.0 2316.9L1531.5 2317.0L1533.0 2317.0L1534.5 2317.0L1536.0 2317.0L1537.5 2317.0L1539.0 2317.0L1540.5 2317.0L1542.0 2317.0L1543.5 2317.0L1545.0 2317.0L1546.5 2317.0L1548.0 2315.5L1549.5 2310.8L1551.0 2302.3L1552.5 2306.6L1554.0 2306.2L1555.5 2304.0L1557.0 2303.9L1558.5 2303.5L1560.0 2307.4L1561.5 2303.0L1563.0 2305.0L1564.5 2307.5L1566.0 2305.2L1567.5 2307.9L1569.0 2303.0L1570.5 2306.9L1572.0 2308.3L1573.5 2305.9L1575.0 2304.8L1576.5 2308.2L1578.0 2306.8L1579.5 2307.5L1581.0 2307.6L1582.5 2306.7L1584.0 2310.0L1585.5 2310.0L1587.0 2307.8L1588.5 2309.0L1590.0 2309.3L1591.5 2311.0L1593.0 2311.3L1594.5 2312.3L1596.0 2312.6L1597.5 2311.9L1599.0 2313.0L1600.5 2311.0L1602.0 2311.9L1603.5 2311.0L1605.0 2312.9L1606.5 2311.3L1608.0 2313.4L1609.5 2313.3L1611.0 2313.1L1612.5 2312.0L1614.0 2312.9L1615.5 2311.8L1617.0 2312.6L1618.5 2313.6L1620.0 2313.3L1621.5 2312.8L1623.0 2312.7L1624.5 2312.3L1626.0 2313.9L1627.5 2311.9L1629.0 2313.9L1630.5 2312.3L1632.0 2312.9L1633.5 2314.0L1635.0 2314.3L1636.5 2314.2L1638.0 2313.9L1639.5 2312.5L1641.0 2314.1L1642.5 2315.0L1644.0 2315.0L1645.5 2315.9L1647.0 2316.5L1648.5 2316.8L1650.0 2317.0L1651.5 2317.0L1653.0 2317.0L1654.5 2317.0L1656.0 2317.0L1657.5 2317.0L1659.0 2317.0L1660.5 2317.0L1662.0 2317.0L1663.5 2317.0L1665.0 2317.0L1666.5 2317.0L1668.0 2315.8L1669.5 2314.9L1671.0 2314.4L1672.5 2313.7L1674.0 2312.1L1675.5 2310.6L1677.0 2310.8L1678.5 2308.3L1680.0 2308.3L1681.5 2305.5L1683.0 2305.4L1684.5 2308.7L1686.0 2309.2L1687.5 2308.4L1689.0 2309.5L1690.5 2309.4L1692.0 2310.4L1693.5 2308.4L1695.0 2312.1L1696.5 2312.0L1698.0 2311.7L1699.5 2311.5L1701.0 2311.5L1702.5 2313.4L1704.0 2313.9L1705.5 2311.7L1707.0 2312.2L1708.5 2313.2L1710.0 2313.6L1711.5 2312.7L1713.0 2314.3L1714.5 2312.4L1716.0 2313.3L1717.5 2312.7L1719.0 2314.3L1720.5 2313.0L1722.0 2313.0L1723.5 2313.9L1725.0 2314.6L1726.5 2314.9L1728.0 2314.3L1729.5 2314.1L1731.0 2314.4L1732.5 2314.7L1734.0 2315.1L1735.5 2314.7L1737.0 2313.8L1738.5 2314.8L1740.0 2315.0L1741.5 2314.4L1743.0 2315.4L1744.5 2315.5L1746.0 2315.6L1747.5 2314.5L1749.0 2315.2L1750.5 2315.7L1752.0 2316.1L1753.5 2316.7L1755.0 2317.0L1756.5 2317.0L1758.0 2317.0L1759.5 2317.0L1761.0 2317.0L1762.5 2316.9L1764.0 2316.8L1765.5 2316.8L1767.0 2316.7L1768.5 2316.6L1770.0 2316.2L1771.5 2314.9L1773.0 2315.0L1774.5 2315.1L1776.0 2313.5L1777.5 2314.0L1779.0 2314.2L1780.5 2313.7L1782.0 2313.2L1783.5 2312.5L1785.0 2312.4L1786.5 2311.3L1788.0 2312.2L1789.5 2311.5L1791.0 2310.9L1792.5 2312.3L1794.0 2312.8L1795.5 2311.2L1797.0 2312.5L1798.5 2312.4L1800.0 2312.2L1801.5 2313.9L1803.0 2312.9L1804.5 2313.4L1806.0 2312.7L1807.5 2312.5L1809.0 2313.9L1810.5 2313.1L1812.0 2313.5L1813.5 2314.2L1815.0 2314.2L1816.5 2313.2L1818.0 2314.1L1819.5 2314.9L1821.0 2314.8L1822.5 2314.5L1824.0 2314.0L1825.5 2315.3L1827.0 2315.5L1828.5 2314.7L1830.0 2315.4L1831.5 2314.7L1833.0 2314.8L1834.5 2315.4L1836.0 2315.4L1837.5 2315.8L1839.0 2315.6L1840.5 2315.8L1842.0 2315.8L1843.5 2316.1L1845.0 2315.4L1846.5 2316.2L1848.0 2316.5L1849.5 2316.6L1851.0 2316.6L1852.5 2316.7L1854.0 2316.7L1855.5 2316.8L1857.0 2316.8L1858.5 2316.9L1860.0 2316.6L1861.5 2315.2L1863.0 2314.6L1864.5 2313.3L1866.0 2313.4L1867.5 2313.0L1869.0 2312.5L1870.5 2313.3L1872.0 2311.8L1873.5 2313.3L1875.0 2314.6L1876.5 2314.2L1878.0 2315.5L1879.5 2315.5L1881.0 2314.7L1882.5 2314.6L1884.0 2313.7L1885.5 2312.8L1887.0 2310.4L1888.5 2310.3L1890.0 2311.0L1891.5 2311.5L1893.0 2309.7L1894.5 2307.4L1896.0 2306.7L1897.5 2309.6L1899.0 2308.6L1900.5 2309.0L1902.0 2307.8L1903.5 2309.5L1905.0 2306.3L1906.5 2309.3L1908.0 2307.6L1909.5 2307.7L1911.0 2310.0L1912.5 2310.4L1914.0 2310.5L1915.5 2309.2L1917.0 2306.9L1918.5 2309.1L1920.0 2307.5L1921.5 2311.0L1923.0 2311.5L1924.5 2309.8L1926.0 2308.9L1927.5 2311.8L1929.0 2308.8L1930.5 2311.2L1932.0 2312.4L1933.5 2309.1L1935.0 2309.5L1936.5 2311.1L1938.0 2311.5L1939.5 2309.9L1941.0 2309.8L1942.5 2307.5L1944.0 2308.1L1945.5 2310.0L1947.0 2310.3L1948.5 2309.3L1950.0 2306.8L1951.5 2305.9L1953.0 2308.9L1954.5 2305.1L1956.0 2309.5L1957.5 2308.2L1959.0 2305.7L1960.5 2308.3L1962.0 2304.1L1963.5 2304.4L1965.0 2308.0L1966.5 2305.7L1968.0 2306.3L1969.5 2306.6L1971.0 2306.9L1972.5 2308.5L1974.0 2307.7L1975.5 2306.5L1977.0 2308.2L1978.5 2307.9L1980.0 2308.7L1981.5 2304.3L1983.0 2308.8L1984.5 2309.0L1986.0 2307.8L1987.5 2307.9L1989.0 2305.4L1990.5 2309.4L1992.0 2308.3L1993.5 2309.2L1995.0 2308.9L1996.5 2309.1L1998.0 2306.1L1999.5 2309.6L2001.0 2310.1L2002.5 2312.4L2004.0 2314.9L2005.5 2315.3L2007.0 2315.4L2008.5 2315.9L2010.0 2315.1L2011.5 2315.7L2013.0 2315.3L2014.5 2315.9L2016.0 2316.2L2017.5 2315.6L2019.0 2316.5L2020.5 2316.6L2022.0 2316.6L2023.5 2314.8L2025.0 2313.9L2026.5 2314.1L2028.0 2314.1L2029.5 2311.9L2031.0 2312.1L2032.5 2310.8L2034.0 2309.6L2035.5 2309.9L2037.0 2309.2L2038.5 2305.9L2040.0 2306.4L2041.5 2304.6L2043.0 2305.6L2044.5 2309.3L2046.0 2309.8L2047.5 2308.8L2049.0 2307.9L2050.5 2309.3L2052.0 2311.7L2053.5 2310.0L2055.0 2312.4L2056.5 2313.8L2058.0 2312.2L2059.5 2313.4L2061.0 2314.5L2062.5 2314.1L2064.0 2314.2L2065.5 2314.7L2067.0 2314.5L2068.5 2314.7L2070.0 2314.5L2071.5 2313.4L2073.0 2315.1L2074.5 2313.6L2076.0 2314.1L2077.5 2313.8L2079.0 2314.6L2080.5 2315.3L2082.0 2315.3L2083.5 2314.4L2085.0 2314.4L2086.5 2315.6L2088.0 2315.7L2089.5 2314.6L2091.0 2315.8L2092.5 2315.3L2094.0 2315.7L2095.5 2315.1L2097.0 2315.4L2098.5 2316.1L2100.0 2316.1L2101.5 2316.2L2103.0 2316.5L2104.5 2316.6L2106.0 2316.7L2107.5 2316.7L2109.0 2316.8L2110.5 2316.9L2112.0 2316.9L2113.5 2317.0L2115.0 2317.0L2116.5 2317.0L2118.0 2317.0L2118.0 2318.6L2116.5 2318.6L2115.0 2318.6L2113.5 2318.6L2112.0 2318.7L2110.5 2318.7L2109.0 2318.8L2107.5 2318.9L2106.0 2318.9L2104.5 2319.0L2103.0 2319.1L2101.5 2319.9L2100.0 2319.6L2098.5 2319.7L2097.0 2320.0L2095.5 2320.6L2094.0 2319.8L2092.5 2320.4L2091.0 2320.5L2089.5 2321.0L2088.0 2320.6L2086.5 2320.2L2085.0 2320.1L2083.5 2321.2L2082.0 2321.2L2080.5 2320.3L2079.0 2321.1L2077.5 2321.8L2076.0 2321.0L2074.5 2321.5L2073.0 2321.0L2071.5 2321.5L2070.0 2322.1L2068.5 2322.1L2067.0 2321.9L2065.5 2322.1L2064.0 2322.1L2062.5 2321.3L2061.0 2321.5L2059.5 2323.0L2058.0 2322.1L2056.5 2322.5L2055.0 2322.7L2053.5 2324.6L2052.0 2324.0L2050.5 2324.3L2049.0 2324.5L2047.5 2326.1L2046.0 2325.5L2044.5 2326.7L2043.0 2328.4L2041.5 2329.0L2040.0 2330.4L2038.5 2328.4L2037.0 2325.6L2035.5 2327.8L2034.0 2323.8L2032.5 2323.5L2031.0 2324.5L2029.5 2322.2L2028.0 2321.5L2026.5 2322.5L2025.0 2321.6L2023.5 2320.1L2022.0 2319.0L2020.5 2319.0L2019.0 2319.1L2017.5 2320.0L2016.0 2319.5L2014.5 2320.0L2013.0 2319.9L2011.5 2319.6L2010.0 2320.6L2008.5 2319.7L2007.0 2320.0L2005.5 2320.3L2004.0 2320.1L2002.5 2321.4L2001.0 2325.4L1999.5 2326.6L1998.0 2327.0L1996.5 2328.1L1995.0 2327.0L1993.5 2327.1L1992.0 2327.3L1990.5 2330.2L1989.0 2327.0L1987.5 2329.7L1986.0 2326.7L1984.5 2327.6L1983.0 2327.1L1981.5 2331.1L1980.0 2332.2L1978.5 2327.6L1977.0 2329.4L1975.5 2330.8L1974.0 2328.6L1972.5 2327.9L1971.0 2328.8L1969.5 2328.0L1968.0 2328.4L1966.5 2331.0L1965.0 2330.7L1963.5 2330.8L1962.0 2327.2L1960.5 2329.1L1959.0 2327.3L1957.5 2328.0L1956.0 2329.3L1954.5 2328.9L1953.0 2326.4L1951.5 2328.4L1950.0 2326.5L1948.5 2327.9L1947.0 2326.5L1945.5 2325.2L1944.0 2325.3L1942.5 2326.5L1941.0 2324.6L1939.5 2327.6L1938.0 2324.7L1936.5 2326.8L1935.0 2326.8L1933.5 2323.7L1932.0 2325.0L1930.5 2324.1L1929.0 2325.7L1927.5 2326.2L1926.0 2326.5L1924.5 2326.5L1923.0 2324.3L1921.5 2326.1L1920.0 2327.2L1918.5 2325.7L1917.0 2329.0L1915.5 2329.0L1914.0 2328.4L1912.5 2325.6L1911.0 2329.8L1909.5 2329.5L1908.0 2329.5L1906.5 2328.5L1905.0 2326.5L1903.5 2327.4L1902.0 2327.0L1900.5 2329.1L1899.0 2328.3L1897.5 2330.7L1896.0 2326.5L1894.5 2327.0L1893.0 2324.8L1891.5 2324.4L1890.0 2327.1L1888.5 2325.9L1887.0 2322.9L1885.5 2322.3L1884.0 2322.6L1882.5 2322.8L1881.0 2321.9L1879.5 2320.2L1878.0 2321.2L1876.5 2320.6L1875.0 2321.2L1873.5 2323.0L1872.0 2323.7L1870.5 2323.8L1869.0 2322.9L1867.5 2322.9L1866.0 2321.7L1864.5 2321.8L1863.0 2320.6L1861.5 2319.9L1860.0 2319.0L1858.5 2318.7L1857.0 2318.8L1855.5 2318.8L1854.0 2318.9L1852.5 2318.9L1851.0 2319.0L1849.5 2319.0L1848.0 2319.1L1846.5 2320.0L1845.0 2319.5L1843.5 2320.2L1842.0 2320.0L1840.5 2319.7L1839.0 2320.3L1837.5 2320.6L1836.0 2319.8L1834.5 2319.9L1833.0 2320.5L1831.5 2321.2L1830.0 2320.5L1828.5 2320.1L1827.0 2320.7L1825.5 2320.3L1824.0 2320.9L1822.5 2320.9L1821.0 2320.6L1819.5 2322.0L1818.0 2321.9L1816.5 2321.2L1815.0 2321.0L1813.5 2321.0L1812.0 2322.2L1810.5 2323.0L1809.0 2322.4L1807.5 2322.3L1806.0 2322.0L1804.5 2323.8L1803.0 2322.3L1801.5 2323.0L1800.0 2322.3L1798.5 2322.5L1797.0 2323.7L1795.5 2322.7L1794.0 2324.7L1792.5 2323.6L1791.0 2322.5L1789.5 2324.0L1788.0 2325.0L1786.5 2323.4L1785.0 2325.1L1783.5 2323.2L1782.0 2323.2L1780.5 2323.3L1779.0 2322.5L1777.5 2322.0L1776.0 2321.3L1774.5 2321.5L1773.0 2320.0L1771.5 2320.6L1770.0 2320.0L1768.5 2319.0L1767.0 2318.9L1765.5 2318.8L1764.0 2318.8L1762.5 2318.7L1761.0 2318.6L1759.5 2318.6L1758.0 2318.6L1756.5 2318.6L1755.0 2318.6L1753.5 2318.9L1752.0 2319.5L1750.5 2320.0L1749.0 2320.1L1747.5 2320.6L1746.0 2320.8L1744.5 2320.4L1743.0 2320.8L1741.5 2321.0L1740.0 2321.7L1738.5 2320.8L1737.0 2321.1L1735.5 2320.8L1734.0 2321.0L1732.5 2322.1L1731.0 2321.3L1729.5 2320.7L1728.0 2321.1L1726.5 2321.3L1725.0 2321.1L1723.5 2321.0L1722.0 2321.1L1720.5 2321.6L1719.0 2322.6L1717.5 2321.2L1716.0 2321.6L1714.5 2323.0L1713.0 2322.4L1711.5 2321.6L1710.0 2322.2L1708.5 2322.7L1707.0 2321.7L1705.5 2323.2L1704.0 2323.1L1702.5 2323.8L1701.0 2321.9L1699.5 2323.1L1698.0 2324.8L1696.5 2326.1L1695.0 2326.1L1693.5 2325.9L1692.0 2325.4L1690.5 2329.2L1689.0 2328.1L1687.5 2326.3L1686.0 2329.5L1684.5 2329.4L1683.0 2333.0L1681.5 2331.1L1680.0 2328.4L1678.5 2326.2L1677.0 2324.7L1675.5 2325.4L1674.0 2323.1L1672.5 2322.1L1671.0 2320.7L1669.5 2320.4L1668.0 2319.4L1666.5 2318.6L1665.0 2318.6L1663.5 2318.6L1662.0 2318.6L1660.5 2318.6L1659.0 2318.6L1657.5 2318.6L1656.0 2318.6L1654.5 2318.6L1653.0 2318.6L1651.5 2318.6L1650.0 2318.6L1648.5 2318.8L1647.0 2319.1L1645.5 2320.8L1644.0 2321.2L1642.5 2320.8L1641.0 2321.5L1639.5 2321.8L1638.0 2322.0L1636.5 2322.5L1635.0 2322.6L1633.5 2321.7L1632.0 2322.4L1630.5 2322.6L1629.0 2323.0L1627.5 2323.8L1626.0 2322.1L1624.5 2323.9L1623.0 2322.7L1621.5 2324.1L1620.0 2322.0L1618.5 2323.2L1617.0 2322.1L1615.5 2322.1L1614.0 2322.8L1612.5 2322.7L1611.0 2322.6L1609.5 2322.7L1608.0 2324.6L1606.5 2322.8L1605.0 2322.7L1603.5 2324.1L1602.0 2324.1L1600.5 2322.9L1599.0 2324.0L1597.5 2323.2L1596.0 2323.9L1594.5 2324.3L1593.0 2323.9L1591.5 2324.5L1590.0 2325.1L1588.5 2326.5L1587.0 2324.9L1585.5 2326.4L1584.0 2326.8L1582.5 2325.8L1581.0 2326.3L1579.5 2326.1L1578.0 2327.7L1576.5 2327.8L1575.0 2329.0L1573.5 2327.7L1572.0 2331.3L1570.5 2328.2L1569.0 2332.5L1567.5 2333.2L1566.0 2330.3L1564.5 2328.2L1563.0 2328.2L1561.5 2333.3L1560.0 2333.0L1558.5 2330.9L1557.0 2333.2L1555.5 2332.6L1554.0 2329.8L1552.5 2332.3L1551.0 2333.5L1549.5 2327.0L1548.0 2320.5L1546.5 2318.6L1545.0 2318.6L1543.5 2318.6L1542.0 2318.6L1540.5 2318.6L1539.0 2318.6L1537.5 2318.6L1536.0 2318.6L1534.5 2318.6L1533.0 2318.6L1531.5 2318.6L1530.0 2318.7L1528.5 2318.7L1527.0 2318.7L1525.5 2318.7L1524.0 2318.7L1522.5 2318.8L1521.0 2318.8L1519.5 2318.8L1518.0 2318.8L1516.5 2318.8L1515.0 2318.9L1513.5 2318.9L1512.0 2318.9L1510.5 2318.9L1509.0 2318.9L1507.5 2319.0L1506.0 2319.0L1504.5 2319.0L1503.0 2319.0L1501.5 2319.0L1500.0 2319.1L1498.5 2319.1L1497.0 2319.1L1495.5 2319.1L1494.0 2319.5L1492.5 2319.8L1491.0 2320.1L1489.5 2319.7L1488.0 2319.6L1486.5 2319.6L1485.0 2320.2L1483.5 2319.6L1482.0 2319.9L1480.5 2320.5L1479.0 2320.3L1477.5 2320.0L1476.0 2320.2L1474.5 2320.3L1473.0 2320.9L1471.5 2321.9L1470.0 2321.4L1468.5 2322.5L1467.0 2321.0L1465.5 2321.3L1464.0 2322.1L1462.5 2323.4L1461.0 2322.9L1459.5 2321.9L1458.0 2322.1L1456.5 2322.8L1455.0 2322.4L1453.5 2323.2L1452.0 2325.6L1450.5 2326.1L1449.0 2326.8L1447.5 2323.6L1446.0 2324.8L1444.5 2327.0L1443.0 2328.2L1441.5 2326.4L1440.0 2328.1L1438.5 2327.2L1437.0 2326.4L1435.5 2326.7L1434.0 2329.0L1432.5 2329.8L1431.0 2326.2L1429.5 2326.6L1428.0 2324.9L1426.5 2326.7L1425.0 2324.1L1423.5 2323.2L1422.0 2322.7L1420.5 2322.2L1419.0 2321.1L1417.5 2320.4L1416.0 2319.9L1414.5 2319.0L1413.0 2319.0L1411.5 2319.0L1410.0 2319.0L1408.5 2319.0L1407.0 2319.0L1405.5 2319.0L1404.0 2319.0L1402.5 2319.0L1401.0 2319.8L1399.5 2320.2L1398.0 2320.5L1396.5 2321.4L1395.0 2323.2L1393.5 2322.4L1392.0 2322.4L1390.5 2325.8L1389.0 2326.3L1387.5 2324.7L1386.0 2324.7L1384.5 2325.5L1383.0 2325.9L1381.5 2326.9L1380.0 2325.9L1378.5 2324.4L1377.0 2324.3L1375.5 2322.2L1374.0 2322.5L1372.5 2321.6L1371.0 2320.5L1369.5 2319.5L1368.0 2318.7L1366.5 2318.8L1365.0 2318.8L1363.5 2318.9L1362.0 2318.9L1360.5 2319.0L1359.0 2319.1L1357.5 2319.1L1356.0 2319.6L1354.5 2320.0L1353.0 2319.6L1351.5 2319.8L1350.0 2320.2L1348.5 2320.8L1347.0 2320.0L1345.5 2319.9L1344.0 2320.6L1342.5 2322.1L1341.0 2324.9L1339.5 2327.1L1338.0 2325.2L1336.5 2326.3L1335.0 2329.6L1333.5 2330.4L1332.0 2327.0L1330.5 2325.4L1329.0 2325.8L1327.5 2327.0L1326.0 2324.3L1324.5 2323.7L1323.0 2325.9L1321.5 2327.3L1320.0 2329.6L1318.5 2327.6L1317.0 2328.3L1315.5 2330.3L1314.0 2329.5L1312.5 2330.8L1311.0 2330.2L1309.5 2334.9L1308.0 2330.0L1306.5 2330.4L1305.0 2328.4L1303.5 2323.9L1302.0 2323.6L1300.5 2324.4L1299.0 2324.2L1297.5 2323.9L1296.0 2321.6L1294.5 2323.2L1293.0 2321.4L1291.5 2320.7L1290.0 2321.1L1288.5 2321.2L1287.0 2320.6L1285.5 2320.0L1284.0 2320.5L1282.5 2320.4L1281.0 2319.8L1279.5 2319.0L1278.0 2318.8L1276.5 2318.7L1275.0 2318.6L1273.5 2318.6L1272.0 2319.0L1270.5 2320.8L1269.0 2321.5L1267.5 2322.6L1266.0 2322.3L1264.5 2323.3L1263.0 2323.4L1261.5 2323.3L1260.0 2324.1L1258.5 2323.5L1257.0 2322.6L1255.5 2323.0L1254.0 2324.6L1252.5 2322.9L1251.0 2323.2L1249.5 2324.5L1248.0 2322.3L1246.5 2322.5L1245.0 2324.3L1243.5 2323.1L1242.0 2323.3L1240.5 2322.8L1239.0 2323.5L1237.5 2324.4L1236.0 2323.7L1234.5 2323.7L1233.0 2324.2L1231.5 2322.9L1230.0 2322.8L1228.5 2325.7L1227.0 2323.2L1225.5 2324.5L1224.0 2327.8L1222.5 2324.6L1221.0 2326.9L1219.5 2327.9L1218.0 2326.4L1216.5 2326.8L1215.0 2330.8L1213.5 2331.2L1212.0 2329.5L1210.5 2329.0L1209.0 2330.9L1207.5 2331.9L1206.0 2335.2L1204.5 2330.7L1203.0 2339.1L1201.5 2338.7L1200.0 2333.0L1198.5 2335.5L1197.0 2336.9L1195.5 2338.9L1194.0 2338.5L1192.5 2337.8L1191.0 2329.8L1189.5 2329.6L1188.0 2327.2L1186.5 2325.4L1185.0 2324.4L1183.5 2321.7L1182.0 2320.6L1180.5 2320.5L1179.0 2320.7L1177.5 2322.2L1176.0 2321.3L1174.5 2321.2L1173.0 2321.7L1171.5 2320.5L1170.0 2320.4L1168.5 2320.1L1167.0 2318.8L1165.5 2318.6L1164.0 2318.6L1162.5 2318.6L1161.0 2318.6L1159.5 2318.6L1158.0 2318.6L1156.5 2318.6L1155.0 2318.6L1153.5 2318.6L1152.0 2318.6L1150.5 2318.6L1149.0 2318.6L1147.5 2318.6L1146.0 2318.6L1144.5 2318.7L1143.0 2318.7L1141.5 2318.8L1140.0 2319.1L1138.5 2320.6L1137.0 2320.7L1135.5 2320.8L1134.0 2320.8L1132.5 2321.1L1131.0 2321.6L1129.5 2321.7L1128.0 2322.0L1126.5 2323.4L1125.0 2323.1L1123.5 2325.3L1122.0 2324.9L1120.5 2324.8L1119.0 2327.8L1117.5 2328.3L1116.0 2326.8L1114.5 2325.2L1113.0 2325.1L1111.5 2327.1L1110.0 2326.7L1108.5 2326.2L1107.0 2326.0L1105.5 2327.2L1104.0 2326.4L1102.5 2327.9L1101.0 2327.4L1099.5 2327.2L1098.0 2330.1L1096.5 2330.7L1095.0 2330.8L1093.5 2329.1L1092.0 2328.7L1090.5 2331.6L1089.0 2329.1L1087.5 2328.4L1086.0 2328.3L1084.5 2329.3L1083.0 2324.6L1081.5 2322.8L1080.0 2321.5L1078.5 2319.0L1077.0 2319.1L1075.5 2319.1L1074.0 2320.2L1072.5 2319.9L1071.0 2319.6L1069.5 2320.1L1068.0 2320.4L1066.5 2319.7L1065.0 2320.0L1063.5 2320.6L1062.0 2319.9L1060.5 2319.8L1059.0 2319.9L1057.5 2320.6L1056.0 2319.9L1054.5 2321.3L1053.0 2320.4L1051.5 2321.2L1050.0 2321.3L1048.5 2322.0L1047.0 2321.4L1045.5 2321.5L1044.0 2321.6L1042.5 2322.1L1041.0 2322.6L1039.5 2324.3L1038.0 2323.0L1036.5 2324.7L1035.0 2324.8L1033.5 2325.5L1032.0 2324.2L1030.5 2325.1L1029.0 2323.6L1027.5 2327.5L1026.0 2327.3L1024.5 2328.7L1023.0 2328.8L1021.5 2326.4L1020.0 2331.9L1018.5 2327.4L1017.0 2327.7L1015.5 2330.8L1014.0 2334.3L1012.5 2330.5L1011.0 2329.8L1009.5 2331.4L1008.0 2331.3L1006.5 2332.5L1005.0 2326.4L1003.5 2323.9L1002.0 2323.2L1000.5 2321.8L999.0 2322.0L997.5 2320.3L996.0 2320.7L994.5 2318.9L993.0 2318.6L991.5 2318.6L990.0 2318.6Z"/>
<path fill="#6882c9" d="M2228.0 2317.0L2229.5 2316.2L2231.0 2315.1L2232.5 2313.6L2234.0 2313.7L2235.5 2312.5L2237.0 2308.5L2238.5 2308.1L2240.0 2308.0L2241.5 2307.5L2243.0 2308.7L2244.5 2308.5L2246.0 2308.7L2247.5 2311.2L2249.0 2309.5L2250.5 2310.8L2252.0 2311.5L2253.5 2313.0L2255.0 2313.5L2256.5 2312.5L2258.0 2313.6L2259.5 2310.5L2261.0 2311.1L2262.5 2310.9L2264.0 2310.8L2265.5 2309.2L2267.0 2308.0L2268.5 2306.2L2270.0 2306.6L2271.5 2305.2L2273.0 2306.1L2274.5 2308.3L2276.0 2308.8L2277.5 2311.9L2279.0 2311.0L2280.5 2313.9L2282.0 2314.3L2283.5 2315.3L2285.0 2314.3L2286.5 2314.2L2288.0 2313.4L2289.5 2312.3L2291.0 2312.8L2292.5 2312.8L2294.0 2311.5L2295.5 2312.1L2297.0 2310.3L2298.5 2311.5L2300.0 2310.4L2301.5 2305.4L2303.0 2306.4L2304.5 2303.2L2306.0 2302.1L2307.5 2296.0L2309.0 2302.3L2310.5 2304.6L2312.0 2299.7L2313.5 2304.8L2315.0 2306.7L2316.5 2309.2L2318.0 2307.7L2319.5 2309.0L2321.0 2309.9L2322.5 2311.1L2324.0 2313.8L2325.5 2312.0L2327.0 2312.8L2328.5 2311.5L2330.0 2311.9L2331.5 2311.5L2333.0 2311.4L2334.5 2309.1L2336.0 2309.7L2337.5 2310.4L2339.0 2307.7L2340.5 2310.1L2342.0 2307.4L2343.5 2309.0L2345.0 2306.4L2346.5 2306.9L2348.0 2310.0L2349.5 2307.9L2351.0 2311.2L2352.5 2310.7L2354.0 2310.1L2355.5 2312.6L2357.0 2311.2L2358.5 2311.8L2360.0 2313.9L2361.5 2313.0L2363.0 2314.5L2364.5 2314.7L2366.0 2313.9L2367.5 2315.4L2369.0 2314.3L2370.5 2315.2L2372.0 2314.6L2373.5 2315.0L2375.0 2315.3L2376.5 2315.9L2378.0 2316.0L2379.5 2315.8L2381.0 2316.5L2382.5 2316.6L2384.0 2316.7L2385.5 2316.8L2387.0 2316.9L2388.5 2316.8L2390.0 2316.8L2391.5 2316.7L2393.0 2316.6L2394.5 2314.9L2396.0 2313.7L2397.5 2312.6L2399.0 2311.7L2400.5 2313.1L2402.0 2312.2L2403.5 2309.8L2405.0 2310.0L2406.5 2308.3L2408.0 2309.1L2409.5 2308.6L2411.0 2309.6L2412.5 2309.3L2414.0 2311.0L2415.5 2308.4L2417.0 2309.4L2418.5 2310.8L2420.0 2312.8L2421.5 2312.8L2423.0 2312.9L2424.5 2312.4L2426.0 2314.3L2427.5 2314.4L2429.0 2312.6L2430.5 2314.5L2432.0 2314.3L2433.5 2314.3L2435.0 2313.8L2436.5 2314.6L2438.0 2314.7L2439.5 2313.7L2441.0 2314.8L2442.5 2314.5L2444.0 2313.8L2445.5 2313.8L2447.0 2314.6L2448.5 2314.5L2450.0 2314.4L2451.5 2312.9L2453.0 2311.2L2454.5 2311.2L2456.0 2308.7L2457.5 2303.8L2459.0 2303.5L2460.5 2307.7L2462.0 2308.2L2463.5 2305.3L2465.0 2304.4L2466.5 2304.8L2468.0 2308.2L2469.5 2308.4L2471.0 2304.5L2472.5 2308.3L2474.0 2303.7L2475.5 2308.4L2477.0 2308.2L2478.5 2305.2L2480.0 2303.1L2481.5 2304.3L2483.0 2304.6L2484.5 2305.0L2486.0 2307.8L2487.5 2312.8L2489.0 2314.3L2490.5 2315.6L2492.0 2315.6L2493.5 2315.0L2495.0 2315.5L2496.5 2315.5L2498.0 2315.8L2499.5 2314.6L2501.0 2315.0L2502.5 2315.1L2504.0 2315.1L2505.5 2315.4L2507.0 2314.7L2508.5 2315.8L2510.0 2314.7L2511.5 2315.4L2513.0 2315.7L2514.5 2315.7L2516.0 2315.6L2517.5 2315.1L2519.0 2315.6L2520.5 2315.5L2522.0 2315.2L2523.5 2315.7L2525.0 2315.4L2526.5 2315.4L2528.0 2314.4L2529.5 2313.8L2531.0 2312.2L2532.5 2311.2L2534.0 2308.6L2535.5 2309.2L2537.0 2307.0L2538.5 2307.9L2540.0 2309.5L2541.5 2310.5L2543.0 2308.9L2544.5 2308.1L2546.0 2311.1L2547.5 2311.3L2549.0 2308.8L2550.5 2311.4L2552.0 2311.4L2553.5 2310.1L2555.0 2312.3L2556.5 2312.0L2558.0 2311.3L2559.5 2312.8L2561.0 2312.1L2562.5 2312.8L2564.0 2310.7L2565.5 2312.5L2567.0 2313.4L2568.5 2313.8L2570.0 2312.2L2571.5 2312.4L2573.0 2313.2L2574.5 2314.5L2576.0 2314.1L2577.5 2315.0L2579.0 2314.0L2580.5 2315.1L2582.0 2315.4L2583.5 2315.4L2585.0 2315.8L2586.5 2316.6L2588.0 2316.8L2589.5 2316.9L2591.0 2317.0L2591.0 2318.6L2589.5 2318.7L2588.0 2318.8L2586.5 2319.0L2585.0 2319.5L2583.5 2320.3L2582.0 2320.1L2580.5 2320.1L2579.0 2321.1L2577.5 2321.6L2576.0 2322.0L2574.5 2322.0L2573.0 2322.5L2571.5 2321.9L2570.0 2321.7L2568.5 2323.9L2567.0 2323.4L2565.5 2322.4L2564.0 2323.2L2562.5 2324.0L2561.0 2323.9L2559.5 2323.6L2558.0 2325.0L2556.5 2324.0L2555.0 2326.1L2553.5 2323.7L2552.0 2324.8L2550.5 2326.9L2549.0 2327.4L2547.5 2326.6L2546.0 2324.9L2544.5 2325.0L2543.0 2328.7L2541.5 2327.5L2540.0 2325.5L2538.5 2329.4L2537.0 2326.5L2535.5 2327.9L2534.0 2326.0L2532.5 2326.2L2531.0 2324.0L2529.5 2324.3L2528.0 2322.3L2526.5 2320.5L2525.0 2320.2L2523.5 2319.9L2522.0 2320.1L2520.5 2320.9L2519.0 2320.6L2517.5 2321.1L2516.0 2320.0L2514.5 2320.5L2513.0 2320.1L2511.5 2320.7L2510.0 2320.4L2508.5 2320.7L2507.0 2320.0L2505.5 2320.5L2504.0 2320.4L2502.5 2320.7L2501.0 2320.0L2499.5 2320.2L2498.0 2320.3L2496.5 2320.2L2495.0 2320.2L2493.5 2320.2L2492.0 2320.5L2490.5 2320.0L2489.0 2322.0L2487.5 2323.5L2486.0 2329.3L2484.5 2327.7L2483.0 2329.7L2481.5 2327.6L2480.0 2330.1L2478.5 2332.1L2477.0 2332.1L2475.5 2332.1L2474.0 2328.0L2472.5 2327.7L2471.0 2327.6L2469.5 2327.8L2468.0 2330.2L2466.5 2330.0L2465.0 2330.8L2463.5 2332.5L2462.0 2331.9L2460.5 2329.4L2459.0 2331.7L2457.5 2328.4L2456.0 2329.9L2454.5 2325.7L2453.0 2325.3L2451.5 2322.4L2450.0 2321.9L2448.5 2321.6L2447.0 2321.1L2445.5 2321.6L2444.0 2321.2L2442.5 2321.7L2441.0 2321.0L2439.5 2321.3L2438.0 2321.7L2436.5 2321.3L2435.0 2321.4L2433.5 2322.1L2432.0 2321.5L2430.5 2321.9L2429.0 2322.8L2427.5 2321.3L2426.0 2321.5L2424.5 2321.8L2423.0 2323.0L2421.5 2323.7L2420.0 2323.4L2418.5 2326.1L2417.0 2323.8L2415.5 2327.0L2414.0 2327.5L2412.5 2328.2L2411.0 2325.7L2409.5 2329.1L2408.0 2330.2L2406.5 2326.4L2405.0 2328.6L2403.5 2325.5L2402.0 2323.9L2400.5 2324.6L2399.0 2323.1L2397.5 2323.1L2396.0 2321.6L2394.5 2319.9L2393.0 2319.0L2391.5 2318.9L2390.0 2318.9L2388.5 2318.8L2387.0 2318.7L2385.5 2318.8L2384.0 2318.9L2382.5 2319.0L2381.0 2319.1L2379.5 2319.6L2378.0 2319.5L2376.5 2319.9L2375.0 2320.2L2373.5 2320.8L2372.0 2320.1L2370.5 2321.4L2369.0 2321.6L2367.5 2321.7L2366.0 2320.5L2364.5 2321.0L2363.0 2321.4L2361.5 2321.6L2360.0 2322.1L2358.5 2322.6L2357.0 2324.0L2355.5 2323.4L2354.0 2326.0L2352.5 2324.1L2351.0 2324.4L2349.5 2325.9L2348.0 2327.3L2346.5 2325.8L2345.0 2327.3L2343.5 2327.0L2342.0 2325.9L2340.5 2326.7L2339.0 2325.6L2337.5 2325.2L2336.0 2327.0L2334.5 2324.2L2333.0 2324.7L2331.5 2325.1L2330.0 2323.8L2328.5 2323.5L2327.0 2323.5L2325.5 2324.9L2324.0 2322.0L2322.5 2324.9L2321.0 2324.7L2319.5 2326.2L2318.0 2325.8L2316.5 2329.4L2315.0 2330.4L2313.5 2328.6L2312.0 2332.3L2310.5 2331.8L2309.0 2336.6L2307.5 2335.5L2306.0 2334.7L2304.5 2332.5L2303.0 2330.0L2301.5 2327.5L2300.0 2328.7L2298.5 2327.5L2297.0 2324.1L2295.5 2324.3L2294.0 2322.9L2292.5 2322.5L2291.0 2324.6L2289.5 2323.8L2288.0 2321.5L2286.5 2320.7L2285.0 2320.2L2283.5 2321.1L2282.0 2321.1L2280.5 2323.5L2279.0 2325.4L2277.5 2323.4L2276.0 2325.8L2274.5 2325.4L2273.0 2327.9L2271.5 2331.6L2270.0 2326.8L2268.5 2330.8L2267.0 2329.5L2265.5 2328.5L2264.0 2326.0L2262.5 2324.5L2261.0 2323.7L2259.5 2323.4L2258.0 2322.3L2256.5 2321.5L2255.0 2323.7L2253.5 2324.0L2252.0 2325.2L2250.5 2325.7L2249.0 2324.7L2247.5 2324.0L2246.0 2326.4L2244.5 2325.1L2243.0 2328.5L2241.5 2330.0L2240.0 2325.8L2238.5 2326.0L2237.0 2325.0L2235.5 2323.3L2234.0 2324.0L2232.5 2321.2L2231.0 2321.0L2229.5 2319.8L2228.0 2318.6Z"/>
<path fill="#6882c9" d="M2640.0 2314.9L2641.5 2311.2L2643.0 2307.0L2644.5 2292.0L2646.0 2294.2L2647.5 2300.8L2649.0 2306.6L2650.5 2306.4L2652.0 2302.1L2653.5 2302.4L2655.0 2306.0L2656.5 2303.0L2658.0 2301.7L2659.5 2304.0L2661.0 2304.7L2662.5 2304.9L2664.0 2301.2L2665.5 2304.4L2667.0 2301.4L2668.5 2301.6L2670.0 2305.1L2671.5 2305.0L2673.0 2307.9L2674.5 2304.7L2676.0 2309.2L2677.5 2309.0L2679.0 2308.7L2680.5 2306.3L2682.0 2310.0L2683.5 2309.2L2685.0 2310.6L2686.5 2310.9L2688.0 2308.5L2689.5 2311.8L2691.0 2309.6L2692.5 2311.8L2694.0 2312.1L2695.5 2312.4L2697.0 2309.9L2698.5 2310.8L2700.0 2312.9L2701.5 2310.3L2703.0 2312.5L2704.5 2312.0L2706.0 2313.1L2707.5 2312.9L2709.0 2313.2L2710.5 2313.5L2712.0 2314.1L2713.5 2312.8L2715.0 2314.1L2716.5 2312.5L2718.0 2314.4L2719.5 2314.6L2721.0 2313.6L2722.5 2314.7L2724.0 2314.6L2725.5 2314.8L2727.0 2313.7L2728.5 2313.3L2730.0 2314.8L2731.5 2315.1L2733.0 2315.0L2734.5 2314.0L2736.0 2315.3L2737.5 2315.2L2739.0 2315.2L2740.5 2315.4L2742.0 2314.3L2743.5 2314.2L2745.0 2314.5L2746.5 2314.8L2748.0 2315.3L2749.5 2315.7L2751.0 2314.8L2752.5 2315.6L2754.0 2315.0L2755.5 2315.0L2757.0 2315.3L2758.5 2315.8L2760.0 2314.9L2761.5 2314.9L2763.0 2315.4L2764.5 2315.1L2766.0 2315.0L2767.5 2316.0L2769.0 2315.5L2770.5 2315.4L2772.0 2316.0L2773.5 2315.2L2775.0 2315.3L2776.5 2315.4L2778.0 2315.4L2779.5 2315.4L2781.0 2315.7L2782.5 2315.4L2784.0 2316.0L2785.5 2316.3L2787.0 2315.9L2788.5 2315.6L2790.0 2316.5L2791.5 2316.5L2793.0 2316.5L2794.5 2316.6L2796.0 2316.6L2797.5 2316.6L2799.0 2316.6L2800.5 2316.7L2802.0 2316.7L2803.5 2316.7L2805.0 2316.8L2806.5 2316.8L2808.0 2316.8L2809.5 2316.9L2811.0 2316.9L2812.5 2317.0L2814.0 2317.0L2815.5 2317.0L2817.0 2317.0L2818.5 2317.0L2820.0 2317.0L2821.5 2317.0L2823.0 2317.0L2823.0 2318.6L2821.5 2318.6L2820.0 2318.6L2818.5 2318.6L2817.0 2318.6L2815.5 2318.6L2814.0 2318.6L2812.5 2318.6L2811.0 2318.7L2809.5 2318.7L2808.0 2318.8L2806.5 2318.8L2805.0 2318.8L2803.5 2318.9L2802.0 2318.9L2800.5 2318.9L2799.0 2319.0L2797.5 2319.0L2796.0 2319.0L2794.5 2319.0L2793.0 2319.1L2791.5 2319.1L2790.0 2319.1L2788.5 2319.8L2787.0 2319.7L2785.5 2319.4L2784.0 2319.8L2782.5 2320.1L2781.0 2319.6L2779.5 2319.5L2778.0 2319.9L2776.5 2320.2L2775.0 2319.6L2773.5 2319.5L2772.0 2319.6L2770.5 2320.6L2769.0 2320.1L2767.5 2319.7L2766.0 2320.3L2764.5 2319.7L2763.0 2319.7L2761.5 2320.8L2760.0 2319.7L2758.5 2320.8L2757.0 2320.5L2755.5 2320.3L2754.0 2320.4L2752.5 2320.5L2751.0 2321.0L2749.5 2320.9L2748.0 2319.9L2746.5 2320.8L2745.0 2320.8L2743.5 2320.5L2742.0 2320.8L2740.5 2320.2L2739.0 2321.5L2737.5 2320.5L2736.0 2320.6L2734.5 2321.1L2733.0 2321.9L2731.5 2321.1L2730.0 2321.1L2728.5 2321.3L2727.0 2321.3L2725.5 2321.6L2724.0 2322.8L2722.5 2321.6L2721.0 2321.2L2719.5 2321.2L2718.0 2321.2L2716.5 2321.8L2715.0 2321.4L2713.5 2322.0L2712.0 2321.8L2710.5 2321.8L2709.0 2324.3L2707.5 2322.2L2706.0 2322.5L2704.5 2324.5L2703.0 2325.2L2701.5 2324.8L2700.0 2323.4L2698.5 2326.0L2697.0 2326.3L2695.5 2325.3L2694.0 2324.6L2692.5 2324.3L2691.0 2325.6L2689.5 2324.4L2688.0 2324.2L2686.5 2325.9L2685.0 2327.1L2683.5 2325.2L2682.0 2325.1L2680.5 2325.6L2679.0 2326.7L2677.5 2328.2L2676.0 2329.4L2674.5 2327.2L2673.0 2328.6L2671.5 2329.9L2670.0 2330.4L2668.5 2334.2L2667.0 2331.9L2665.5 2330.0L2664.0 2334.4L2662.5 2329.1L2661.0 2329.4L2659.5 2332.7L2658.0 2329.1L2656.5 2334.3L2655.0 2332.3L2653.5 2329.5L2652.0 2333.8L2650.5 2335.0L2649.0 2329.1L2647.5 2333.3L2646.0 2336.3L2644.5 2342.8L2643.0 2330.6L2641.5 2323.9L2640.0 2320.6Z"/>
<path fill="#6882c9" d="M2872.0 2316.5L2873.5 2312.0L2875.0 2307.1L2876.5 2303.3L2878.0 2304.4L2879.5 2295.0L2881.0 2293.7L2882.5 2297.4L2884.0 2295.1L2885.5 2298.4L2887.0 2295.3L2888.5 2288.4L2890.0 2290.3L2891.5 2295.2L2893.0 2302.1L2894.5 2302.9L2896.0 2298.1L2897.5 2306.2L2899.0 2305.5L2900.5 2307.7L2902.0 2305.2L2903.5 2304.0L2905.0 2307.8L2906.5 2309.0L2908.0 2308.7L2909.5 2309.8L2911.0 2309.1L2912.5 2307.0L2914.0 2309.8L2915.5 2308.4L2917.0 2307.2L2918.5 2308.9L2920.0 2311.7L2921.5 2311.2L2923.0 2312.2L2924.5 2312.2L2926.0 2312.5L2927.5 2310.4L2929.0 2312.1L2930.5 2310.8L2932.0 2311.3L2933.5 2307.8L2935.0 2310.2L2936.5 2309.5L2938.0 2306.4L2939.5 2307.2L2941.0 2305.3L2942.5 2307.4L2944.0 2309.0L2945.5 2306.9L2947.0 2310.1L2948.5 2307.0L2950.0 2310.8L2951.5 2310.9L2953.0 2312.2L2954.5 2313.7L2956.0 2313.9L2957.5 2312.2L2959.0 2312.7L2960.5 2313.2L2962.0 2314.3L2963.5 2314.4L2965.0 2314.3L2966.5 2312.9L2968.0 2313.1L2969.5 2314.4L2971.0 2314.6L2972.5 2314.1L2974.0 2313.6L2975.5 2311.1L2977.0 2312.0L2978.5 2312.5L2980.0 2309.6L2981.5 2310.7L2983.0 2308.1L2984.5 2308.0L2986.0 2309.7L2987.5 2310.2L2989.0 2308.3L2990.5 2310.6L2992.0 2309.5L2993.5 2311.7L2995.0 2311.5L2996.5 2311.1L2998.0 2310.6L2999.5 2311.9L3001.0 2310.9L3002.5 2312.4L3004.0 2311.0L3005.5 2310.9L3007.0 2312.7L3008.5 2313.7L3010.0 2312.0L3011.5 2313.0L3013.0 2313.2L3014.5 2313.4L3016.0 2313.9L3017.5 2314.3L3019.0 2314.5L3020.5 2315.5L3022.0 2315.3L3023.5 2315.8L3025.0 2315.6L3026.5 2316.0L3028.0 2316.5L3029.5 2315.7L3031.0 2314.8L3032.5 2314.4L3034.0 2313.2L3035.5 2312.0L3037.0 2312.4L3038.5 2312.5L3040.0 2312.1L3041.5 2312.5L3043.0 2311.9L3044.5 2311.2L3046.0 2311.5L3047.5 2311.5L3049.0 2310.7L3050.5 2310.8L3052.0 2312.4L3053.5 2311.7L3055.0 2310.5L3056.5 2311.9L3058.0 2310.9L3059.5 2313.2L3061.0 2312.1L3062.5 2312.1L3064.0 2312.9L3065.5 2313.3L3067.0 2311.2L3068.5 2311.3L3070.0 2312.6L3071.5 2311.6L3073.0 2313.8L3074.5 2313.1L3076.0 2315.1L3077.5 2315.7L3079.0 2314.0L3080.5 2311.3L3082.0 2311.9L3083.5 2310.0L3085.0 2305.7L3086.5 2307.9L3088.0 2304.5L3089.5 2308.1L3091.0 2308.9L3092.5 2309.5L3094.0 2310.5L3095.5 2312.4L3097.0 2313.8L3098.5 2313.9L3100.0 2313.4L3101.5 2314.8L3103.0 2314.4L3104.5 2313.6L3106.0 2315.2L3107.5 2314.9L3109.0 2314.6L3110.5 2315.1L3112.0 2315.4L3113.5 2314.9L3115.0 2315.8L3116.5 2316.1L3118.0 2315.7L3119.5 2316.5L3121.0 2316.6L3122.5 2316.1L3124.0 2315.1L3125.5 2315.4L3127.0 2314.5L3128.5 2314.2L3130.0 2311.8L3131.5 2312.6L3133.0 2309.7L3134.5 2311.4L3136.0 2306.5L3137.5 2308.2L3139.0 2308.0L3140.5 2309.6L3142.0 2309.8L3143.5 2311.8L3145.0 2312.6L3146.5 2312.5L3148.0 2312.4L3149.5 2314.0L3151.0 2314.4L3152.5 2313.3L3154.0 2312.3L3155.5 2313.3L3157.0 2312.7L3158.5 2311.3L3160.0 2313.4L3161.5 2313.1L3163.0 2312.1L3164.5 2311.8L3166.0 2312.4L3167.5 2312.2L3169.0 2311.3L3170.5 2312.3L3172.0 2311.1L3173.5 2311.7L3175.0 2313.6L3176.5 2313.9L3178.0 2313.3L3179.5 2313.0L3181.0 2314.6L3182.5 2314.6L3184.0 2313.0L3185.5 2307.8L3187.0 2309.3L3188.5 2304.5L3190.0 2306.4L3191.5 2308.3L3193.0 2310.6L3194.5 2309.8L3196.0 2311.4L3197.5 2310.4L3199.0 2311.4L3200.5 2312.0L3202.0 2313.5L3203.5 2312.0L3205.0 2312.8L3206.5 2311.8L3208.0 2307.9L3209.5 2307.5L3211.0 2309.0L3212.5 2308.3L3214.0 2309.1L3215.5 2310.3L3217.0 2309.6L3218.5 2307.0L3220.0 2310.1L3221.5 2310.4L3223.0 2310.2L3224.5 2310.7L3226.0 2309.8L3227.5 2308.3L3229.0 2309.4L3230.5 2310.6L3232.0 2310.2L3233.5 2308.2L3235.0 2310.5L3236.5 2310.5L3238.0 2309.9L3239.5 2310.1L3241.0 2309.7L3242.5 2308.4L3244.0 2310.8L3245.5 2308.8L3247.0 2308.9L3248.5 2306.8L3250.0 2310.7L3251.5 2309.4L3253.0 2308.6L3254.5 2308.6L3256.0 2310.1L3257.5 2306.0L3259.0 2305.5L3260.5 2309.2L3262.0 2308.4L3263.5 2308.8L3265.0 2308.5L3266.5 2309.2L3268.0 2308.7L3269.5 2308.2L3271.0 2309.8L3272.5 2310.2L3274.0 2306.9L3275.5 2307.9L3277.0 2311.5L3278.5 2310.8L3280.0 2311.6L3281.5 2310.9L3283.0 2312.6L3284.5 2311.0L3286.0 2313.1L3287.5 2313.2L3289.0 2311.3L3290.5 2313.2L3292.0 2313.1L3293.5 2312.7L3295.0 2313.2L3296.5 2312.0L3298.0 2313.3L3299.5 2313.0L3301.0 2313.0L3302.5 2312.1L3304.0 2311.7L3305.5 2312.3L3307.0 2313.5L3308.5 2313.3L3310.0 2313.5L3311.5 2314.7L3313.0 2314.8L3314.5 2315.4L3316.0 2315.5L3317.5 2315.7L3319.0 2315.5L3320.5 2316.5L3322.0 2316.8L3323.5 2316.8L3325.0 2316.1L3326.5 2315.6L3328.0 2313.8L3329.5 2313.7L3331.0 2313.5L3332.5 2313.1L3334.0 2311.8L3335.5 2311.3L3337.0 2312.0L3338.5 2311.4L3340.0 2310.5L3341.5 2313.0L3343.0 2310.6L3344.5 2312.3L3346.0 2311.2L3347.5 2312.0L3349.0 2312.0L3350.5 2312.1L3352.0 2314.4L3353.5 2314.9L3355.0 2315.0L3356.5 2315.5L3358.0 2315.7L3359.5 2315.4L3361.0 2315.1L3362.5 2315.7L3364.0 2314.8L3365.5 2315.1L3367.0 2315.7L3368.5 2315.2L3370.0 2316.0L3371.5 2316.0L3373.0 2315.2L3374.5 2315.4L3376.0 2315.6L3377.5 2315.7L3379.0 2316.0L3380.5 2315.9L3382.0 2316.2L3383.5 2316.1L3385.0 2316.2L3386.5 2316.5L3388.0 2316.5L3389.5 2316.6L3391.0 2316.6L3392.5 2316.6L3394.0 2315.8L3395.5 2315.6L3397.0 2314.6L3398.5 2314.5L3400.0 2314.4L3401.5 2314.4L3403.0 2313.4L3404.5 2314.4L3406.0 2314.9L3407.5 2314.5L3409.0 2314.6L3410.5 2314.6L3412.0 2315.4L3413.5 2315.7L3415.0 2316.7L3416.5 2317.0L3418.0 2317.0L3418.0 2318.6L3416.5 2318.6L3415.0 2318.9L3413.5 2319.9L3412.0 2319.7L3410.5 2320.1L3409.0 2320.5L3407.5 2321.6L3406.0 2321.2L3404.5 2321.1L3403.0 2322.0L3401.5 2321.8L3400.0 2321.9L3398.5 2321.2L3397.0 2321.3L3395.5 2321.0L3394.0 2320.1L3392.5 2319.0L3391.0 2319.0L3389.5 2319.0L3388.0 2319.1L3386.5 2319.1L3385.0 2319.6L3383.5 2319.4L3382.0 2319.6L3380.5 2319.9L3379.0 2319.4L3377.5 2320.2L3376.0 2320.3L3374.5 2319.7L3373.0 2319.7L3371.5 2320.3L3370.0 2319.7L3368.5 2320.0L3367.0 2319.7L3365.5 2320.3L3364.0 2320.6L3362.5 2319.9L3361.0 2319.9L3359.5 2320.1L3358.0 2320.0L3356.5 2320.0L3355.0 2321.4L3353.5 2321.6L3352.0 2323.4L3350.5 2322.6L3349.0 2322.6L3347.5 2325.5L3346.0 2325.4L3344.5 2323.5L3343.0 2323.6L3341.5 2323.2L3340.0 2324.8L3338.5 2323.5L3337.0 2322.9L3335.5 2322.7L3334.0 2324.9L3332.5 2322.1L3331.0 2322.1L3329.5 2321.3L3328.0 2322.2L3326.5 2320.4L3325.0 2319.5L3323.5 2318.9L3322.0 2318.8L3320.5 2319.1L3319.0 2320.0L3317.5 2319.8L3316.0 2320.8L3314.5 2320.4L3313.0 2320.6L3311.5 2322.2L3310.0 2322.2L3308.5 2323.3L3307.0 2323.3L3305.5 2322.9L3304.0 2323.3L3302.5 2323.1L3301.0 2322.5L3299.5 2322.2L3298.0 2322.6L3296.5 2322.3L3295.0 2322.3L3293.5 2323.5L3292.0 2322.4L3290.5 2322.5L3289.0 2323.0L3287.5 2324.5L3286.0 2323.1L3284.5 2322.9L3283.0 2323.5L3281.5 2325.8L3280.0 2325.1L3278.5 2325.5L3277.0 2325.8L3275.5 2325.1L3274.0 2327.2L3272.5 2327.4L3271.0 2326.9L3269.5 2328.4L3268.0 2328.8L3266.5 2331.9L3265.0 2326.6L3263.5 2327.8L3262.0 2326.3L3260.5 2326.2L3259.0 2326.0L3257.5 2327.5L3256.0 2325.8L3254.5 2326.5L3253.0 2330.0L3251.5 2325.3L3250.0 2328.2L3248.5 2325.0L3247.0 2326.1L3245.5 2328.6L3244.0 2325.3L3242.5 2327.4L3241.0 2325.5L3239.5 2325.6L3238.0 2329.1L3236.5 2325.0L3235.0 2325.0L3233.5 2325.3L3232.0 2327.5L3230.5 2327.5L3229.0 2329.2L3227.5 2327.6L3226.0 2329.2L3224.5 2329.2L3223.0 2326.7L3221.5 2325.9L3220.0 2325.9L3218.5 2325.5L3217.0 2326.4L3215.5 2325.6L3214.0 2325.5L3212.5 2326.7L3211.0 2329.3L3209.5 2325.4L3208.0 2325.9L3206.5 2323.8L3205.0 2322.9L3203.5 2322.7L3202.0 2322.2L3200.5 2322.8L3199.0 2323.2L3197.5 2324.7L3196.0 2323.8L3194.5 2325.0L3193.0 2325.6L3191.5 2326.3L3190.0 2326.2L3188.5 2329.4L3187.0 2326.3L3185.5 2326.7L3184.0 2322.9L3182.5 2322.4L3181.0 2322.1L3179.5 2321.8L3178.0 2321.7L3176.5 2321.9L3175.0 2323.6L3173.5 2324.0L3172.0 2323.0L3170.5 2323.8L3169.0 2323.5L3167.5 2325.3L3166.0 2324.3L3164.5 2324.3L3163.0 2325.2L3161.5 2323.9L3160.0 2323.9L3158.5 2322.7L3157.0 2322.8L3155.5 2322.2L3154.0 2321.7L3152.5 2322.9L3151.0 2321.3L3149.5 2322.3L3148.0 2322.2L3146.5 2322.8L3145.0 2324.5L3143.5 2326.5L3142.0 2324.0L3140.5 2328.0L3139.0 2325.2L3137.5 2325.2L3136.0 2329.7L3134.5 2326.9L3133.0 2325.6L3131.5 2325.2L3130.0 2322.2L3128.5 2322.3L3127.0 2320.9L3125.5 2320.4L3124.0 2319.7L3122.5 2320.1L3121.0 2319.0L3119.5 2319.1L3118.0 2319.7L3116.5 2320.4L3115.0 2320.6L3113.5 2320.0L3112.0 2320.3L3110.5 2321.3L3109.0 2321.0L3107.5 2321.1L3106.0 2321.7L3104.5 2321.3L3103.0 2322.4L3101.5 2321.2L3100.0 2322.0L3098.5 2321.6L3097.0 2322.4L3095.5 2322.9L3094.0 2323.7L3092.5 2324.1L3091.0 2326.8L3089.5 2327.2L3088.0 2327.3L3086.5 2327.6L3085.0 2327.3L3083.5 2329.4L3082.0 2325.3L3080.5 2324.7L3079.0 2321.5L3077.5 2320.6L3076.0 2320.9L3074.5 2321.5L3073.0 2321.7L3071.5 2322.7L3070.0 2322.3L3068.5 2324.4L3067.0 2322.8L3065.5 2322.6L3064.0 2323.0L3062.5 2324.7L3061.0 2322.5L3059.5 2323.7L3058.0 2322.5L3056.5 2323.2L3055.0 2325.5L3053.5 2324.0L3052.0 2322.9L3050.5 2324.4L3049.0 2323.7L3047.5 2325.9L3046.0 2323.6L3044.5 2323.2L3043.0 2323.2L3041.5 2325.7L3040.0 2324.1L3038.5 2324.2L3037.0 2325.8L3035.5 2323.7L3034.0 2322.4L3032.5 2321.2L3031.0 2320.7L3029.5 2320.0L3028.0 2319.1L3026.5 2319.5L3025.0 2319.6L3023.5 2320.5L3022.0 2320.7L3020.5 2320.3L3019.0 2321.4L3017.5 2321.8L3016.0 2321.3L3014.5 2321.9L3013.0 2321.4L3011.5 2322.8L3010.0 2322.4L3008.5 2323.8L3007.0 2323.1L3005.5 2324.9L3004.0 2324.2L3002.5 2325.1L3001.0 2325.4L2999.5 2324.9L2998.0 2325.9L2996.5 2326.3L2995.0 2325.9L2993.5 2325.7L2992.0 2326.1L2990.5 2328.4L2989.0 2327.2L2987.5 2326.5L2986.0 2327.9L2984.5 2328.5L2983.0 2327.4L2981.5 2327.1L2980.0 2326.8L2978.5 2323.7L2977.0 2323.3L2975.5 2323.5L2974.0 2324.0L2972.5 2321.2L2971.0 2320.8L2969.5 2321.8L2968.0 2321.4L2966.5 2322.5L2965.0 2321.7L2963.5 2322.8L2962.0 2322.0L2960.5 2323.0L2959.0 2323.7L2957.5 2321.8L2956.0 2322.7L2954.5 2324.3L2953.0 2323.5L2951.5 2326.0L2950.0 2324.5L2948.5 2326.4L2947.0 2325.5L2945.5 2331.2L2944.0 2327.2L2942.5 2328.0L2941.0 2329.3L2939.5 2332.9L2938.0 2331.9L2936.5 2327.3L2935.0 2330.1L2933.5 2328.5L2932.0 2327.0L2930.5 2326.2L2929.0 2323.8L2927.5 2325.5L2926.0 2325.1L2924.5 2326.5L2923.0 2323.6L2921.5 2325.5L2920.0 2326.9L2918.5 2327.6L2917.0 2324.7L2915.5 2325.0L2914.0 2326.8L2912.5 2327.1L2911.0 2326.7L2909.5 2328.9L2908.0 2328.8L2906.5 2326.7L2905.0 2327.3L2903.5 2328.1L2902.0 2333.1L2900.5 2333.3L2899.0 2331.5L2897.5 2335.2L2896.0 2337.0L2894.5 2333.2L2893.0 2342.3L2891.5 2336.4L2890.0 2338.3L2888.5 2340.3L2887.0 2350.7L2885.5 2339.2L2884.0 2341.7L2882.5 2336.8L2881.0 2334.6L2879.5 2337.8L2878.0 2334.4L2876.5 2334.5L2875.0 2329.8L2873.5 2324.2L2872.0 2319.1Z"/>
<path fill="#6882c9" d="M3550.0 2317.0L3551.5 2317.0L3553.0 2316.9L3554.5 2316.8L3556.0 2316.7L3557.5 2316.5L3559.0 2315.6L3560.5 2315.8L3562.0 2316.0L3563.5 2315.4L3565.0 2314.5L3566.5 2313.2L3568.0 2310.1L3569.5 2309.2L3571.0 2309.1L3572.5 2305.5L3574.0 2305.8L3575.5 2305.8L3577.0 2309.8L3578.5 2306.7L3580.0 2310.2L3581.5 2308.3L3583.0 2306.8L3584.5 2310.6L3586.0 2310.3L3587.5 2308.1L3589.0 2309.7L3590.5 2308.9L3592.0 2311.2L3593.5 2308.9L3595.0 2308.5L3596.5 2306.2L3598.0 2309.5L3599.5 2308.5L3601.0 2307.2L3602.5 2308.1L3604.0 2304.8L3605.5 2303.7L3607.0 2307.3L3608.5 2306.8L3610.0 2309.2L3611.5 2311.0L3613.0 2312.0L3614.5 2311.1L3616.0 2311.6L3617.5 2313.1L3619.0 2315.1L3620.5 2315.5L3622.0 2315.2L3623.5 2315.7L3625.0 2315.9L3626.5 2315.6L3628.0 2316.0L3629.5 2316.5L3631.0 2316.6L3632.5 2316.7L3634.0 2316.8L3635.5 2316.8L3637.0 2316.9L3638.5 2316.0L3640.0 2315.3L3641.5 2314.3L3643.0 2313.3L3644.5 2312.9L3646.0 2309.9L3647.5 2311.4L3649.0 2309.8L3650.5 2309.4L3652.0 2306.2L3653.5 2307.1L3655.0 2305.3L3656.5 2307.3L3658.0 2308.4L3659.5 2306.0L3661.0 2308.8L3662.5 2308.0L3664.0 2309.5L3665.5 2309.3L3667.0 2308.3L3668.5 2305.3L3670.0 2308.9L3671.5 2306.8L3673.0 2305.7L3674.5 2307.4L3676.0 2309.0L3677.5 2308.9L3679.0 2306.6L3680.5 2306.5L3682.0 2309.5L3683.5 2309.2L3685.0 2309.6L3686.5 2312.3L3688.0 2313.3L3689.5 2312.4L3691.0 2313.8L3692.5 2315.1L3694.0 2315.9L3695.5 2315.1L3697.0 2315.4L3698.5 2316.0L3700.0 2316.3L3701.5 2316.5L3703.0 2316.6L3704.5 2315.0L3706.0 2314.5L3707.5 2314.1L3709.0 2313.2L3710.5 2312.7L3712.0 2314.1L3713.5 2312.5L3715.0 2313.3L3716.5 2312.3L3718.0 2309.4L3719.5 2309.0L3721.0 2311.0L3722.5 2309.8L3724.0 2310.8L3725.5 2311.3L3727.0 2312.6L3728.5 2312.9L3730.0 2313.0L3731.5 2313.2L3733.0 2313.0L3734.5 2313.6L3736.0 2312.1L3737.5 2314.1L3739.0 2314.3L3740.5 2313.4L3742.0 2314.8L3743.5 2314.2L3745.0 2312.7L3746.5 2310.6L3748.0 2308.1L3749.5 2305.7L3751.0 2305.4L3752.5 2308.5L3754.0 2307.9L3755.5 2309.5L3757.0 2309.6L3758.5 2310.0L3760.0 2310.5L3761.5 2307.8L3763.0 2309.4L3764.5 2310.8L3766.0 2309.5L3767.5 2311.9L3769.0 2312.3L3770.5 2309.5L3772.0 2310.0L3773.5 2311.3L3775.0 2311.6L3776.5 2312.4L3778.0 2311.2L3779.5 2311.7L3781.0 2312.6L3782.5 2312.2L3784.0 2311.7L3785.5 2312.9L3787.0 2314.3L3788.5 2314.5L3790.0 2314.6L3791.5 2314.8L3793.0 2313.4L3794.5 2313.8L3796.0 2314.4L3797.5 2313.9L3799.0 2311.4L3800.5 2311.5L3802.0 2312.2L3803.5 2311.5L3805.0 2310.3L3806.5 2309.9L3808.0 2310.9L3809.5 2312.4L3811.0 2312.9L3812.5 2311.9L3814.0 2312.2L3815.5 2314.1L3817.0 2314.4L3818.5 2313.7L3820.0 2314.1L3821.5 2314.5L3823.0 2313.5L3824.5 2313.4L3826.0 2313.5L3827.5 2314.7L3829.0 2314.5L3830.5 2314.4L3832.0 2314.5L3833.5 2313.9L3835.0 2313.1L3836.5 2314.3L3838.0 2313.0L3839.5 2313.9L3841.0 2313.9L3842.5 2313.9L3844.0 2312.6L3845.5 2313.6L3847.0 2313.4L3848.5 2314.4L3850.0 2314.4L3851.5 2313.4L3853.0 2313.9L3854.5 2313.6L3856.0 2314.7L3857.5 2313.9L3859.0 2314.5L3860.5 2313.9L3862.0 2314.9L3863.5 2314.3L3865.0 2314.2L3866.5 2315.2L3868.0 2314.8L3869.5 2314.7L3871.0 2314.1L3872.5 2314.3L3874.0 2315.6L3875.5 2315.6L3877.0 2315.3L3878.5 2315.6L3880.0 2314.9L3881.5 2314.6L3883.0 2313.6L3884.5 2313.4L3886.0 2312.1L3887.5 2312.5L3889.0 2309.1L3890.5 2310.2L3892.0 2306.6L3893.5 2308.0L3895.0 2310.6L3896.5 2308.3L3898.0 2306.9L3899.5 2310.0L3901.0 2309.8L3902.5 2310.0L3904.0 2310.5L3905.5 2309.6L3907.0 2309.7L3908.5 2310.5L3910.0 2309.6L3911.5 2311.3L3913.0 2312.7L3914.5 2312.6L3916.0 2312.9L3917.5 2311.5L3919.0 2311.2L3920.5 2312.0L3922.0 2313.7L3923.5 2313.3L3925.0 2313.7L3926.5 2313.6L3928.0 2312.9L3929.5 2312.7L3931.0 2313.3L3932.5 2312.9L3934.0 2313.7L3935.5 2311.9L3937.0 2312.9L3938.5 2313.9L3940.0 2312.1L3941.5 2313.6L3943.0 2312.1L3944.5 2312.5L3946.0 2314.0L3947.5 2314.0L3949.0 2313.6L3950.5 2314.3L3950.5 2321.9L3949.0 2321.4L3947.5 2322.6L3946.0 2322.6L3944.5 2321.6L3943.0 2322.4L3941.5 2322.0L3940.0 2321.9L3938.5 2321.9L3937.0 2323.4L3935.5 2322.5L3934.0 2322.9L3932.5 2322.9L3931.0 2322.9L3929.5 2321.9L3928.0 2322.4L3926.5 2322.5L3925.0 2324.1L3923.5 2322.1L3922.0 2324.1L3920.5 2323.4L3919.0 2322.7L3917.5 2324.3L3916.0 2322.8L3914.5 2323.4L3913.0 2323.1L3911.5 2323.5L3910.0 2324.6L3908.5 2323.6L3907.0 2325.8L3905.5 2324.0L3904.0 2327.9L3902.5 2327.6L3901.0 2325.3L3899.5 2325.2L3898.0 2328.3L3896.5 2328.2L3895.0 2325.4L3893.5 2326.9L3892.0 2329.3L3890.5 2324.5L3889.0 2324.0L3887.5 2324.6L3886.0 2323.5L3884.5 2323.6L3883.0 2323.4L3881.5 2322.5L3880.0 2321.3L3878.5 2320.7L3877.0 2320.0L3875.5 2321.4L3874.0 2321.3L3872.5 2320.4L3871.0 2321.0L3869.5 2321.3L3868.0 2321.5L3866.5 2321.2L3865.0 2321.0L3863.5 2322.0L3862.0 2320.8L3860.5 2322.3L3859.0 2320.9L3857.5 2321.0L3856.0 2322.8L3854.5 2322.4L3853.0 2321.2L3851.5 2321.3L3850.0 2322.2L3848.5 2321.4L3847.0 2322.7L3845.5 2322.9L3844.0 2322.8L3842.5 2321.6L3841.0 2322.5L3839.5 2322.9L3838.0 2322.6L3836.5 2321.1L3835.0 2321.0L3833.5 2322.2L3832.0 2321.0L3830.5 2320.9L3829.0 2322.3L3827.5 2320.9L3826.0 2321.1L3824.5 2322.2L3823.0 2320.8L3821.5 2322.1L3820.0 2321.9L3818.5 2321.3L3817.0 2321.1L3815.5 2321.0L3814.0 2323.1L3812.5 2323.2L3811.0 2323.5L3809.5 2326.0L3808.0 2324.3L3806.5 2326.3L3805.0 2326.5L3803.5 2327.7L3802.0 2324.4L3800.5 2323.3L3799.0 2322.4L3797.5 2321.8L3796.0 2321.2L3794.5 2320.6L3793.0 2321.2L3791.5 2322.6L3790.0 2322.9L3788.5 2321.7L3787.0 2322.4L3785.5 2323.1L3784.0 2323.1L3782.5 2323.5L3781.0 2322.4L3779.5 2322.5L3778.0 2324.3L3776.5 2322.8L3775.0 2323.2L3773.5 2324.8L3772.0 2325.1L3770.5 2323.2L3769.0 2323.5L3767.5 2325.6L3766.0 2327.1L3764.5 2325.7L3763.0 2328.5L3761.5 2325.5L3760.0 2327.3L3758.5 2326.8L3757.0 2329.1L3755.5 2329.9L3754.0 2326.8L3752.5 2329.9L3751.0 2333.1L3749.5 2327.7L3748.0 2327.5L3746.5 2325.7L3745.0 2325.2L3743.5 2321.6L3742.0 2321.1L3740.5 2321.8L3739.0 2322.1L3737.5 2321.8L3736.0 2322.3L3734.5 2323.0L3733.0 2322.4L3731.5 2323.6L3730.0 2323.1L3728.5 2324.0L3727.0 2324.3L3725.5 2323.4L3724.0 2324.7L3722.5 2324.0L3721.0 2324.1L3719.5 2325.7L3718.0 2325.5L3716.5 2322.9L3715.0 2322.6L3713.5 2323.0L3712.0 2323.3L3710.5 2321.2L3709.0 2321.3L3707.5 2320.6L3706.0 2320.0L3704.5 2319.8L3703.0 2319.0L3701.5 2319.1L3700.0 2320.1L3698.5 2320.1L3697.0 2319.9L3695.5 2320.0L3694.0 2320.9L3692.5 2320.7L3691.0 2321.0L3689.5 2323.4L3688.0 2323.8L3686.5 2325.9L3685.0 2326.6L3683.5 2329.1L3682.0 2328.9L3680.5 2327.0L3679.0 2327.1L3677.5 2329.5L3676.0 2327.9L3674.5 2328.4L3673.0 2330.6L3671.5 2328.1L3670.0 2331.5L3668.5 2326.6L3667.0 2331.3L3665.5 2329.7L3664.0 2330.0L3662.5 2326.5L3661.0 2326.4L3659.5 2331.0L3658.0 2328.0L3656.5 2327.2L3655.0 2327.4L3653.5 2331.1L3652.0 2327.1L3650.5 2326.2L3649.0 2324.9L3647.5 2325.2L3646.0 2324.8L3644.5 2323.2L3643.0 2323.9L3641.5 2321.3L3640.0 2321.0L3638.5 2319.6L3637.0 2318.7L3635.5 2318.8L3634.0 2318.9L3632.5 2318.9L3631.0 2319.0L3629.5 2319.1L3628.0 2320.0L3626.5 2319.6L3625.0 2319.6L3623.5 2320.3L3622.0 2320.1L3620.5 2320.7L3619.0 2321.0L3617.5 2322.4L3616.0 2322.1L3614.5 2323.5L3613.0 2324.7L3611.5 2328.9L3610.0 2326.8L3608.5 2327.5L3607.0 2332.7L3605.5 2328.1L3604.0 2327.7L3602.5 2332.0L3601.0 2327.2L3599.5 2327.0L3598.0 2328.9L3596.5 2327.6L3595.0 2325.5L3593.5 2325.7L3592.0 2325.5L3590.5 2328.0L3589.0 2326.4L3587.5 2325.9L3586.0 2328.4L3584.5 2327.1L3583.0 2327.1L3581.5 2326.0L3580.0 2326.0L3578.5 2327.2L3577.0 2329.6L3575.5 2327.2L3574.0 2329.5L3572.5 2327.4L3571.0 2328.5L3569.5 2327.5L3568.0 2324.5L3566.5 2324.1L3565.0 2322.1L3563.5 2320.7L3562.0 2320.3L3560.5 2319.7L3559.0 2320.1L3557.5 2319.1L3556.0 2318.9L3554.5 2318.8L3553.0 2318.7L3551.5 2318.6L3550.0 2318.6Z"/>
</g>
</svg>
<div class="abs" style="left:130.0px;top:1988.5px;width:2.4px;height:405.0px;background:#f4f4f4;"></div>
<div class="t" id="t0" style="left:432.0px;top:104.51px;font-size:24.20px;color:#d8d8d8;font-weight:400;letter-spacing:-0.341px;">MASTER THESIS</div>
<div class="t" id="t1" style="left:643.0px;top:104.51px;font-size:24.20px;color:#d8d8d8;font-weight:400;letter-spacing:0.000px;">/</div>
<div class="t" id="t2" style="left:667.0px;top:104.51px;font-size:24.20px;color:#d8d8d8;font-weight:400;letter-spacing:0.336px;">Gemma Copeland</div>
<div class="t" id="t3" style="left:3727.0px;top:104.51px;font-size:24.20px;color:#d8d8d8;font-weight:400;letter-spacing:0.308px;">Publish</div>
<div class="t" id="t4" style="left:1480.0px;top:176.01px;font-size:24.20px;color:#f0e9df;font-weight:400;letter-spacing:0.600px;">You have 1 hour 8 minutes of transcription remaining. <u>Upgrade to increase your transcription limit</u>.</div>
<div class="t" id="t5" style="left:208.0px;top:248.01px;font-size:24.20px;color:#d8d8d8;font-weight:400;letter-spacing:0.600px;">Write</div>
<div class="t" id="t6" style="left:3506.0px;top:242.24px;font-size:25.00px;color:#f0f0f0;font-weight:700;letter-spacing:-0.521px;">Layers</div>
<div class="t" id="t7" style="left:3555.0px;top:306.51px;font-size:24.20px;color:#cfcfcf;font-weight:400;letter-spacing:0.695px;">Script</div>
<div class="t" id="t8" style="left:3449.0px;top:104.74px;font-size:17.50px;color:#f1cfc2;font-weight:700;letter-spacing:-0.541px;">AH</div>
<div class="t" id="t9" style="left:3493.7px;top:104.86px;font-size:18.00px;color:#b4b4b4;font-weight:700;letter-spacing:0.500px;">A</div>
<div class="t" id="t10" style="left:1127.0px;top:404.70px;font-size:48.20px;color:#f0f0f0;font-weight:400;letter-spacing:-0.004px;">Gemma Copeland</div>
<div class="t" id="t11" style="left:1126.5px;top:566.82px;font-size:26.50px;color:#7db36f;font-weight:400;letter-spacing:2.031px;-webkit-text-stroke:0.7px #7db36f;">Amaury</div>
<div class="t" id="t12" style="left:1127.0px;top:726.82px;font-size:26.50px;color:#6f8fe0;font-weight:400;letter-spacing:1.470px;-webkit-text-stroke:0.7px #6f8fe0;">Gemma</div>
<div class="t" id="t13" style="left:1126.5px;top:1271.12px;font-size:26.50px;color:#7db36f;font-weight:400;letter-spacing:2.031px;-webkit-text-stroke:0.7px #7db36f;">Amaury</div>
<div class="t" id="t14" style="left:1127.0px;top:1558.82px;font-size:26.50px;color:#6f8fe0;font-weight:400;letter-spacing:1.470px;-webkit-text-stroke:0.7px #6f8fe0;">Gemma</div>
<div class="t" id="t15" style="left:1138.2px;top:623.09px;font-size:31.50px;color:#d7d7d7;font-weight:400;letter-spacing:0.865px;">Can you <i class="mk"></i>start by introducing<i class="mk"></i>yourself? What do you do?</div>
<div class="t" id="t16" style="left:1126.2px;top:782.39px;font-size:31.50px;color:#d7d7d7;font-weight:400;letter-spacing:0.603px;"><i class="mk mk0"></i>Yeah, sure. <i class="mk"></i>So I'm Gemma Copeland. I am a designer and<i class="mk"></i>independent researcher. <i class="mk"></i>I am</div>
<div class="t" id="t17" style="left:1126.2px;top:846.49px;font-size:31.50px;color:#d7d7d7;font-weight:400;letter-spacing:0.723px;">based in Lisbon, but previously I lived in The UK, the Netherlands and Australia, <i class="mk"></i>and have</div>
<div class="t" id="t18" style="left:1126.2px;top:910.59px;font-size:31.50px;color:#d7d7d7;font-weight:400;letter-spacing:0.850px;">worked at design studios and all of those places. <i class="mk"></i>The main thing that I do day to day is</div>
<div class="t" id="t19" style="left:1126.2px;top:974.59px;font-size:31.50px;color:#d7d7d7;font-weight:400;letter-spacing:0.976px;">I'm part of a worker cooperative called common knowledge, <i class="mk"></i>which is<i class="mk"></i>distributed in</div>
<div class="t" id="t20" style="left:1126.2px;top:1038.69px;font-size:31.50px;color:#d7d7d7;font-weight:400;letter-spacing:0.781px;">Europe and the UK, <i class="mk"></i>we are seven people at the moment. <i class="mk"></i>And it's a mix of kind of</div>
<div class="t" id="t21" style="left:1126.2px;top:1102.69px;font-size:31.50px;color:#d7d7d7;font-weight:400;letter-spacing:0.931px;">designers and developers and facilitators and organizers. And we work with, <i class="mk"></i>left wing</div>
<div class="t" id="t22" style="left:1126.2px;top:1166.79px;font-size:31.50px;color:#d7d7d7;font-weight:400;letter-spacing:0.954px;">political organizations to help them with<i class="mk"></i>their design and digital strategy, basically.</div>
<div class="t" id="t23" style="left:1135.5px;top:1325.99px;font-size:31.50px;color:#d7d7d7;font-weight:400;letter-spacing:0.776px;"><i class="mk mk0"></i>What is the digital platforms do you use daily for your visual research, notes, or</div>
<div class="t" id="t24" style="left:1126.2px;top:1390.19px;font-size:31.50px;color:#d7d7d7;font-weight:400;letter-spacing:0.965px;">organization tool within your creative practice, whether it is common knowledge or just</div>
<div class="t" id="t25" style="left:1126.2px;top:1454.29px;font-size:31.50px;color:#d7d7d7;font-weight:400;letter-spacing:0.563px;">you.</div>
<div class="t" id="t26" style="left:1136.5px;top:1614.99px;font-size:31.50px;color:#d7d7d7;font-weight:400;letter-spacing:0.847px;"><i class="mk mk0"></i>in my<i class="mk"></i>personal practice or,<i class="mk"></i>as I'm working on common knowledge projects, it's mainly,</div>
<div class="t" id="t27" style="left:1126.2px;top:1678.99px;font-size:31.50px;color:#d7d7d7;font-weight:400;letter-spacing:0.756px;"><i class="mk mk0"></i>arena for references and then obsidian obsidian for like note taking, which is also I guess</div>
<div class="t" id="t28" style="left:1126.2px;top:1742.99px;font-size:31.50px;color:#d7d7d7;font-weight:400;letter-spacing:0.482px;">like a digital garden.</div>
<div class="t" id="t29" style="left:1126.2px;top:1838.99px;font-size:31.50px;color:#d7d7d7;font-weight:400;letter-spacing:0.755px;">Although I don't think I use it to its full extent. I'm not like a super, I don't have this amazing</div>
<div class="t" id="t30" style="left:209.0px;top:1920.51px;font-size:24.20px;color:#d8d8d8;font-weight:400;letter-spacing:0.568px;">Hide timeline</div>
<div class="t" id="t31" style="left:1634.7px;top:1920.51px;font-size:24.20px;color:#d0d0d0;font-weight:400;letter-spacing:1.285px;">00:00.0</div>
<div class="t" id="t32" style="left:1741.0px;top:1920.51px;font-size:24.20px;color:#d0d0d0;font-weight:400;letter-spacing:0.000px;">/</div>
<div class="t" id="t33" style="left:1766.6px;top:1920.51px;font-size:24.20px;color:#d0d0d0;font-weight:400;letter-spacing:1.200px;">32:07.9</div>
<div class="t" id="t34" style="left:148.6px;top:1991.32px;font-size:23.60px;color:#c6c6c6;font-weight:400;letter-spacing:0.270px;">0:00</div>
<div class="t" id="t35" style="left:368.7px;top:1991.32px;font-size:23.60px;color:#c6c6c6;font-weight:400;letter-spacing:0.270px;">0:01</div>
<div class="t" id="t36" style="left:588.8px;top:1991.32px;font-size:23.60px;color:#c6c6c6;font-weight:400;letter-spacing:0.270px;">0:02</div>
<div class="t" id="t37" style="left:808.9px;top:1991.32px;font-size:23.60px;color:#c6c6c6;font-weight:400;letter-spacing:0.270px;">0:03</div>
<div class="t" id="t38" style="left:1029.0px;top:1991.32px;font-size:23.60px;color:#c6c6c6;font-weight:400;letter-spacing:0.270px;">0:04</div>
<div class="t" id="t39" style="left:1249.1px;top:1991.32px;font-size:23.60px;color:#c6c6c6;font-weight:400;letter-spacing:0.270px;">0:05</div>
<div class="t" id="t40" style="left:1469.2px;top:1991.32px;font-size:23.60px;color:#c6c6c6;font-weight:400;letter-spacing:0.270px;">0:06</div>
<div class="t" id="t41" style="left:1689.3px;top:1991.32px;font-size:23.60px;color:#c6c6c6;font-weight:400;letter-spacing:0.270px;">0:07</div>
<div class="t" id="t42" style="left:1909.4px;top:1991.32px;font-size:23.60px;color:#c6c6c6;font-weight:400;letter-spacing:0.270px;">0:08</div>
<div class="t" id="t43" style="left:2129.5px;top:1991.32px;font-size:23.60px;color:#c6c6c6;font-weight:400;letter-spacing:0.270px;">0:09</div>
<div class="t" id="t44" style="left:2349.6px;top:1991.32px;font-size:23.60px;color:#c6c6c6;font-weight:400;letter-spacing:0.270px;">0:10</div>
<div class="t" id="t45" style="left:2569.7px;top:1991.32px;font-size:23.60px;color:#c6c6c6;font-weight:400;letter-spacing:0.707px;">0:11</div>
<div class="t" id="t46" style="left:2789.8px;top:1991.32px;font-size:23.60px;color:#c6c6c6;font-weight:400;letter-spacing:0.270px;">0:12</div>
<div class="t" id="t47" style="left:3009.9px;top:1991.32px;font-size:23.60px;color:#c6c6c6;font-weight:400;letter-spacing:0.270px;">0:13</div>
<div class="t" id="t48" style="left:3230.0px;top:1991.32px;font-size:23.60px;color:#c6c6c6;font-weight:400;letter-spacing:0.270px;">0:14</div>
<div class="t" id="t49" style="left:3450.1px;top:1991.32px;font-size:23.60px;color:#c6c6c6;font-weight:400;letter-spacing:0.270px;">0:15</div>
<div class="t" id="t50" style="left:3670.2px;top:1991.32px;font-size:23.60px;color:#c6c6c6;font-weight:400;letter-spacing:0.270px;">0:16</div>
<div class="t" id="t51" style="left:3890.3px;top:1991.32px;font-size:23.60px;color:#c6c6c6;font-weight:400;letter-spacing:0.270px;">0:17</div>
<div class="abs" style="left:3390.0px;top:94.0px;width:60.0px;height:60.0px;background:#1a1a1a;border-radius:50%;"></div>
<div class="abs" style="left:3396.0px;top:100.0px;width:48.0px;height:48.0px;background:#1a1a1a;border-radius:50%;box-shadow:inset 0 0 0 2px #3b3b3b;"></div>
<svg class="abs" style="left:3396px;top:100px" width="48" height="48" viewBox="3396 100 48 48" fill="none" stroke="#e6e6e6" stroke-width="2.1" stroke-linecap="round"><path d="M3421 112.2V134M3410 123.2H3432"/></svg>
<div class="wt" style="left:145.2px;top:2197.80px;width:50.1px;overflow:hidden;font-size:22.8px"><span style="padding-left:10.5px">Can</span></div>
<div class="wt" style="left:199.3px;top:2197.80px;width:108.0px;overflow:hidden;font-size:22.8px"><span style="padding-left:10.5px">you</span></div>
<div class="wt" style="left:323.0px;top:2197.80px;width:52.4px;overflow:hidden;font-size:22.8px"><span style="padding-left:10.5px">star</span></div>
<div class="wt" style="left:383.4px;top:2197.80px;width:45.2px;overflow:hidden;font-size:22.8px"><span style="padding-left:10.5px">by</span></div>
<div class="wt" style="left:430.6px;top:2197.80px;width:13.3px;text-align:center;font-size:22.8px;color:#c9c9c9">.</div>
<div class="wt" style="left:447.5px;top:2197.80px;width:147.8px;overflow:hidden;font-size:22.8px"><span style="padding-left:10.5px">introducing</span></div>
<div class="wt" style="left:602.7px;top:2197.80px;width:139.8px;overflow:hidden;font-size:22.8px"><span style="padding-left:10.5px">yourself?</span></div>
<div class="wt" style="left:757.0px;top:2197.80px;width:48.6px;overflow:hidden;font-size:22.8px"><span style="padding-left:10.5px">Wha</span></div>
<div class="wt" style="left:809.6px;top:2197.80px;width:17.6px;overflow:hidden;font-size:22.8px"><span style="padding-left:10.5px">c</span></div>
<div class="wt" style="left:831.2px;top:2197.80px;width:34.2px;overflow:hidden;font-size:22.8px"><span style="padding-left:10.5px">yo</span></div>
<div class="wt" style="left:869.4px;top:2197.80px;width:93.2px;overflow:hidden;font-size:22.8px"><span style="padding-left:10.5px">do?</span></div>
<div class="wt" style="left:969.6px;top:2197.80px;width:14.0px;text-align:center;font-size:22.8px;color:#c9c9c9">.</div>
<div class="wt" style="left:987.5px;top:2197.80px;width:63.8px;overflow:hidden;font-size:22.8px"><span style="padding-left:10.5px">Yeah,</span></div>
<div class="wt" style="left:1055.3px;top:2197.80px;width:81.1px;overflow:hidden;font-size:22.8px"><span style="padding-left:10.5px">sure.</span></div>
<div class="wt" style="left:1142.4px;top:2197.80px;width:20.6px;text-align:center;font-size:22.8px;color:#c9c9c9">.</div>
<div class="wt" style="left:1167.6px;top:2197.80px;width:29.9px;overflow:hidden;font-size:22.8px"><span style="padding-left:10.5px">So</span></div>
<div class="wt" style="left:1201.5px;top:2197.80px;width:65.1px;overflow:hidden;font-size:22.8px"><span style="padding-left:10.5px">I'm</span></div>
<div class="wt" style="left:1283.2px;top:2197.80px;width:111.3px;overflow:hidden;font-size:22.8px"><span style="padding-left:10.5px">Gemma</span></div>
<div class="wt" style="left:1398.5px;top:2197.80px;width:125.5px;overflow:hidden;font-size:22.8px"><span style="padding-left:10.5px">Copeland.</span></div>
<div class="wt" style="left:1527.7px;top:2197.80px;width:13.3px;text-align:center;font-size:22.8px;color:#c9c9c9">.</div>
<div class="wt" style="left:1545.7px;top:2197.80px;width:102.1px;overflow:hidden;font-size:22.8px"><span style="padding-left:10.5px">I</span></div>
<div class="wt" style="left:1649.8px;top:2197.80px;width:13.2px;text-align:center;font-size:22.8px;color:#c9c9c9">.</div>
<div class="wt" style="left:1667.4px;top:2197.80px;width:81.6px;overflow:hidden;font-size:22.8px"><span style="padding-left:10.5px">am</span></div>
<div class="wt" style="left:1758.8px;top:2197.80px;width:82.2px;overflow:hidden;font-size:22.8px"><span style="padding-left:10.5px">a</span></div>
<div class="wt" style="left:1852.8px;top:2197.80px;width:156.5px;overflow:hidden;font-size:22.8px"><span style="padding-left:10.5px">designer</span></div>
<div class="wt" style="left:2015.6px;top:2197.80px;width:96.7px;overflow:hidden;font-size:22.8px"><span style="padding-left:10.5px">and</span></div>
<div class="wt" style="left:2114.3px;top:2197.80px;width:108.7px;text-align:center;font-size:22.8px;color:#c9c9c9">...</div>
<div class="wt" style="left:2227.0px;top:2197.80px;width:151.7px;overflow:hidden;font-size:22.8px"><span style="padding-left:10.5px">independent</span></div>
<div class="wt" style="left:2391.2px;top:2197.80px;width:199.3px;overflow:hidden;font-size:22.8px"><span style="padding-left:10.5px">researcher.</span></div>
<div class="wt" style="left:2592.5px;top:2197.80px;width:40.5px;text-align:center;font-size:22.8px;color:#c9c9c9">...</div>
<div class="wt" style="left:2637.0px;top:2197.80px;width:56.5px;overflow:hidden;font-size:22.8px"><span style="padding-left:10.5px">I</span></div>
<div class="wt" style="left:2697.5px;top:2197.80px;width:122.9px;overflow:hidden;font-size:22.8px"><span style="padding-left:10.5px">am</span></div>
<div class="wt" style="left:2822.4px;top:2197.80px;width:40.9px;text-align:center;font-size:22.8px;color:#c9c9c9">...</div>
<div class="wt" style="left:2867.6px;top:2197.80px;width:67.8px;overflow:hidden;font-size:22.8px"><span style="padding-left:10.5px">based</span></div>
<div class="wt" style="left:2939.4px;top:2197.80px;width:25.9px;overflow:hidden;font-size:22.8px"><span style="padding-left:10.5px">in</span></div>
<div class="wt" style="left:2969.3px;top:2197.80px;width:95.3px;overflow:hidden;font-size:22.8px"><span style="padding-left:10.5px">Lisbon,</span></div>
<div class="wt" style="left:3072.0px;top:2197.80px;width:35.0px;overflow:hidden;font-size:22.8px"><span style="padding-left:10.5px">bu</span></div>
<div class="wt" style="left:3111.0px;top:2197.80px;width:150.4px;overflow:hidden;font-size:22.8px"><span style="padding-left:10.5px">previously</span></div>
<div class="wt" style="left:3265.4px;top:2197.80px;width:15.3px;overflow:hidden;font-size:22.8px"><span style="padding-left:10.5px">I</span></div>
<div class="wt" style="left:3284.7px;top:2197.80px;width:46.1px;overflow:hidden;font-size:22.8px"><span style="padding-left:10.5px">live</span></div>
<div class="wt" style="left:3334.8px;top:2197.80px;width:79.2px;overflow:hidden;font-size:22.8px"><span style="padding-left:10.5px">in</span></div>
<div class="wt" style="left:3416.0px;top:2197.80px;width:131.7px;text-align:center;font-size:22.8px;color:#c9c9c9">...</div>
<div class="wt" style="left:3551.6px;top:2197.80px;width:67.2px;overflow:hidden;font-size:22.8px"><span style="padding-left:10.5px">The</span></div>
<div class="wt" style="left:3629.4px;top:2197.80px;width:58.9px;overflow:hidden;font-size:22.8px"><span style="padding-left:10.5px">UK,</span></div>
<div class="wt" style="left:3694.8px;top:2197.80px;width:263.2px;overflow:hidden;font-size:22.8px"><span style="padding-left:10.5px">the Netherlands and Australia,</span></div>
<div class="abs" style="left:3950.4px;top:2150.0px;width:1.6px;height:245.0px;background:#5a5a5a;"></div>
<div class="abs" style="left:3952.0px;top:2150.0px;width:120.0px;height:300.0px;background:#000;"></div>
</body></html>
